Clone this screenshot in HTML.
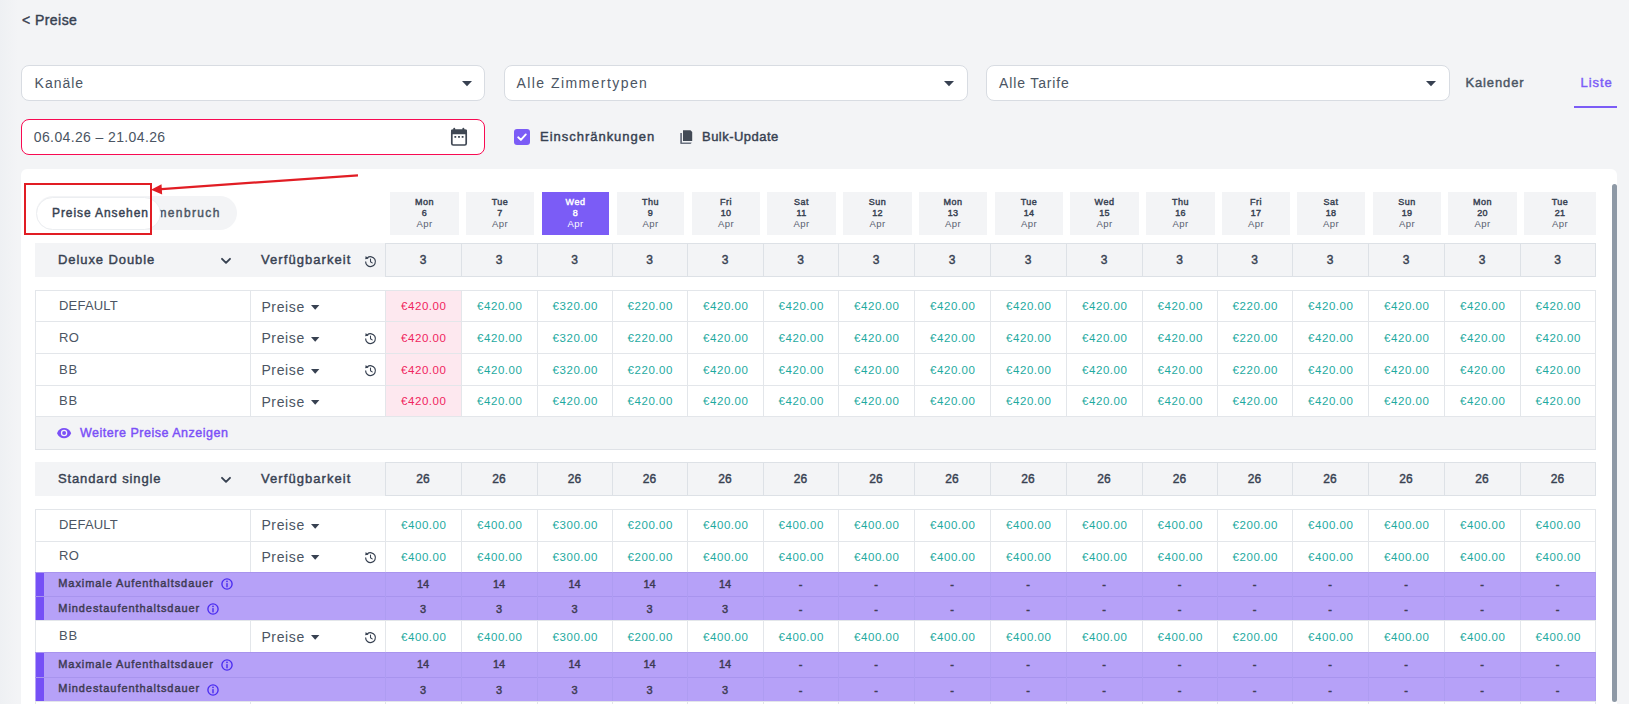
<!DOCTYPE html>
<html><head><meta charset="utf-8"><title>Preise</title>
<style>
html,body{margin:0;padding:0;}
body{width:1629px;height:704px;overflow:hidden;background:#f3f4f6;position:relative;font-family:"Liberation Sans", sans-serif;}
.t{position:absolute;white-space:nowrap;line-height:1;}
.r{position:absolute;display:block;}
</style></head><body>
<div class="r" style="left:0.00px;top:0.00px;width:18.00px;height:704.00px;background:linear-gradient(90deg,#eef0f3,#f3f4f6)"></div>
<div class="t" style="left:22.00px;top:13.35px;font-size:14px;font-weight:400;-webkit-text-stroke:0.42px #374151;color:#374151;letter-spacing:0.450px;">&lt; Preise</div>
<div class="r" style="left:21.00px;top:65.00px;width:464.00px;height:36.00px;background:#fff;border:1px solid #d8dce2;border-radius:8px;box-sizing:border-box"></div>
<div class="t" style="left:34.60px;top:76.25px;font-size:14px;font-weight:400;color:#4b5563;letter-spacing:0.981px;">Kanäle</div>
<svg class="r" style="left:461.8px;top:80.8px" width="10" height="6" viewBox="0 0 10 6"><polygon points="0,0 10,0 5.0,5.2" fill="#374151"/></svg>
<div class="r" style="left:504.00px;top:65.00px;width:464.00px;height:36.00px;background:#fff;border:1px solid #d8dce2;border-radius:8px;box-sizing:border-box"></div>
<div class="t" style="left:516.50px;top:76.25px;font-size:14px;font-weight:400;color:#4b5563;letter-spacing:1.432px;">Alle Zimmertypen</div>
<svg class="r" style="left:943.8px;top:80.8px" width="10" height="6" viewBox="0 0 10 6"><polygon points="0,0 10,0 5.0,5.2" fill="#374151"/></svg>
<div class="r" style="left:986.00px;top:65.00px;width:464.00px;height:36.00px;background:#fff;border:1px solid #d8dce2;border-radius:8px;box-sizing:border-box"></div>
<div class="t" style="left:999.00px;top:76.25px;font-size:14px;font-weight:400;color:#4b5563;letter-spacing:0.868px;">Alle Tarife</div>
<svg class="r" style="left:1426.3px;top:80.8px" width="10" height="6" viewBox="0 0 10 6"><polygon points="0,0 10,0 5.0,5.2" fill="#374151"/></svg>
<div class="t" style="left:1465.40px;top:76.19px;font-size:13px;font-weight:400;-webkit-text-stroke:0.42px #4b5563;color:#4b5563;letter-spacing:0.893px;">Kalender</div>
<div class="t" style="left:1580.50px;top:76.19px;font-size:13px;font-weight:400;-webkit-text-stroke:0.42px #7b5cf6;color:#7b5cf6;letter-spacing:0.933px;">Liste</div>
<div class="r" style="left:1574.00px;top:106.00px;width:43.00px;height:2.00px;background:#7b5cf6"></div>
<div class="r" style="left:21.00px;top:119.00px;width:464.00px;height:36.00px;background:#fff;border:1.5px solid #f80a52;border-radius:8px;box-sizing:border-box"></div>
<div class="t" style="left:33.80px;top:129.95px;font-size:14px;font-weight:400;color:#4b5563;letter-spacing:0.374px;">06.04.26 – 21.04.26</div>
<svg class="r" style="left:450px;top:127px" width="18" height="20" viewBox="0 0 18 20"><rect x="1.8" y="3.4" width="14.4" height="14.6" rx="1.5" fill="none" stroke="#3f4753" stroke-width="1.7"/><rect x="1" y="2.6" width="16" height="4.6" rx="1" fill="#3f4753"/><rect x="3.3" y="0.8" width="1.9" height="3.3" rx="0.9" fill="#3f4753"/><rect x="12.4" y="0.8" width="1.9" height="3.3" rx="0.9" fill="#3f4753"/><rect x="4.4" y="9.0" width="1.8" height="1.8" fill="#3f4753"/><rect x="8.1" y="9.0" width="1.8" height="1.8" fill="#3f4753"/><rect x="11.7" y="9.0" width="1.8" height="1.8" fill="#3f4753"/></svg>
<div class="r" style="left:514.00px;top:129.00px;width:16.00px;height:16.00px;background:#7b5cf6;border-radius:3px"></div>
<svg class="r" style="left:514px;top:129px" width="16" height="16" viewBox="0 0 16 16"><polyline points="4.2,8.3 6.9,10.9 11.8,5.4" fill="none" stroke="#fff" stroke-width="1.9" stroke-linecap="round" stroke-linejoin="round"/></svg>
<div class="t" style="left:540.00px;top:130.29px;font-size:13px;font-weight:400;-webkit-text-stroke:0.42px #374151;color:#374151;letter-spacing:0.981px;">Einschränkungen</div>
<svg class="r" style="left:679px;top:129px" width="15" height="16" viewBox="0 0 15 16"><path d="M1.2 4 V14.2 Q1.2 15 2 15 H11.5 L12.5 14 V13.5 H3 V4 Z" fill="#6b7280"/><path d="M4 1.2 H11.5 L13.2 2.9 V12 H4 Z" fill="#424a56"/></svg>
<div class="t" style="left:702.00px;top:130.29px;font-size:13px;font-weight:400;-webkit-text-stroke:0.42px #374151;color:#374151;letter-spacing:0.475px;">Bulk-Update</div>
<div class="r" style="left:21.00px;top:169.00px;width:1596.00px;height:600.00px;background:#fff;border-radius:6px"></div>
<div class="r" style="left:1612.00px;top:184.00px;width:5.00px;height:518.00px;background:#8e99a6;border-radius:3px"></div>
<div class="r" style="left:35.50px;top:196.00px;width:201.00px;height:33.50px;background:#f3f4f6;border-radius:17px"></div>
<div class="t" style="left:-179.30px;width:400px;text-align:right;top:206.54px;font-size:12px;font-weight:400;-webkit-text-stroke:0.42px #4b5563;color:#4b5563;letter-spacing:1.361px;">menbruch</div>
<div class="r" style="left:35.50px;top:196.50px;width:125.00px;height:33.00px;background:#fff;border:1px solid #eceef1;border-radius:17px;box-sizing:border-box"></div>
<div class="t" style="left:52.00px;top:206.54px;font-size:12px;font-weight:400;-webkit-text-stroke:0.42px #374151;color:#374151;letter-spacing:0.911px;">Preise Ansehen</div>
<div class="r" style="left:390.00px;top:192.00px;width:69.00px;height:43.00px;background:#f3f4f6"></div>
<div class="t" style="left:274.50px;width:300px;text-align:center;top:198.28px;font-size:9px;font-weight:400;-webkit-text-stroke:0.42px #374151;color:#374151;letter-spacing:0.000px;letter-spacing:0.5px">Mon</div>
<div class="t" style="left:274.50px;width:300px;text-align:center;top:209.08px;font-size:9px;font-weight:400;-webkit-text-stroke:0.42px #374151;color:#374151;letter-spacing:0.000px;letter-spacing:0.3px">6</div>
<div class="t" style="left:274.50px;width:300px;text-align:center;top:218.66px;font-size:9.5px;font-weight:400;color:#586070;letter-spacing:0.000px;letter-spacing:0.4px">Apr</div>
<div class="r" style="left:466.00px;top:192.00px;width:68.00px;height:43.00px;background:#f3f4f6"></div>
<div class="t" style="left:350.00px;width:300px;text-align:center;top:198.28px;font-size:9px;font-weight:400;-webkit-text-stroke:0.42px #374151;color:#374151;letter-spacing:0.000px;letter-spacing:0.5px">Tue</div>
<div class="t" style="left:350.00px;width:300px;text-align:center;top:209.08px;font-size:9px;font-weight:400;-webkit-text-stroke:0.42px #374151;color:#374151;letter-spacing:0.000px;letter-spacing:0.3px">7</div>
<div class="t" style="left:350.00px;width:300px;text-align:center;top:218.66px;font-size:9.5px;font-weight:400;color:#586070;letter-spacing:0.000px;letter-spacing:0.4px">Apr</div>
<div class="r" style="left:542.00px;top:192.00px;width:67.00px;height:43.00px;background:#7b5cf6"></div>
<div class="t" style="left:425.50px;width:300px;text-align:center;top:198.28px;font-size:9px;font-weight:400;-webkit-text-stroke:0.42px #fff;color:#fff;letter-spacing:0.000px;letter-spacing:0.5px">Wed</div>
<div class="t" style="left:425.50px;width:300px;text-align:center;top:209.08px;font-size:9px;font-weight:400;-webkit-text-stroke:0.42px #fff;color:#fff;letter-spacing:0.000px;letter-spacing:0.3px">8</div>
<div class="t" style="left:425.50px;width:300px;text-align:center;top:218.66px;font-size:9.5px;font-weight:400;color:#fff;letter-spacing:0.000px;letter-spacing:0.4px">Apr</div>
<div class="r" style="left:617.00px;top:192.00px;width:67.00px;height:43.00px;background:#f3f4f6"></div>
<div class="t" style="left:500.50px;width:300px;text-align:center;top:198.28px;font-size:9px;font-weight:400;-webkit-text-stroke:0.42px #374151;color:#374151;letter-spacing:0.000px;letter-spacing:0.5px">Thu</div>
<div class="t" style="left:500.50px;width:300px;text-align:center;top:209.08px;font-size:9px;font-weight:400;-webkit-text-stroke:0.42px #374151;color:#374151;letter-spacing:0.000px;letter-spacing:0.3px">9</div>
<div class="t" style="left:500.50px;width:300px;text-align:center;top:218.66px;font-size:9.5px;font-weight:400;color:#586070;letter-spacing:0.000px;letter-spacing:0.4px">Apr</div>
<div class="r" style="left:692.00px;top:192.00px;width:68.00px;height:43.00px;background:#f3f4f6"></div>
<div class="t" style="left:576.00px;width:300px;text-align:center;top:198.28px;font-size:9px;font-weight:400;-webkit-text-stroke:0.42px #374151;color:#374151;letter-spacing:0.000px;letter-spacing:0.5px">Fri</div>
<div class="t" style="left:576.00px;width:300px;text-align:center;top:209.08px;font-size:9px;font-weight:400;-webkit-text-stroke:0.42px #374151;color:#374151;letter-spacing:0.000px;letter-spacing:0.3px">10</div>
<div class="t" style="left:576.00px;width:300px;text-align:center;top:218.66px;font-size:9.5px;font-weight:400;color:#586070;letter-spacing:0.000px;letter-spacing:0.4px">Apr</div>
<div class="r" style="left:767.00px;top:192.00px;width:69.00px;height:43.00px;background:#f3f4f6"></div>
<div class="t" style="left:651.50px;width:300px;text-align:center;top:198.28px;font-size:9px;font-weight:400;-webkit-text-stroke:0.42px #374151;color:#374151;letter-spacing:0.000px;letter-spacing:0.5px">Sat</div>
<div class="t" style="left:651.50px;width:300px;text-align:center;top:209.08px;font-size:9px;font-weight:400;-webkit-text-stroke:0.42px #374151;color:#374151;letter-spacing:0.000px;letter-spacing:0.3px">11</div>
<div class="t" style="left:651.50px;width:300px;text-align:center;top:218.66px;font-size:9.5px;font-weight:400;color:#586070;letter-spacing:0.000px;letter-spacing:0.4px">Apr</div>
<div class="r" style="left:843.00px;top:192.00px;width:69.00px;height:43.00px;background:#f3f4f6"></div>
<div class="t" style="left:727.50px;width:300px;text-align:center;top:198.28px;font-size:9px;font-weight:400;-webkit-text-stroke:0.42px #374151;color:#374151;letter-spacing:0.000px;letter-spacing:0.5px">Sun</div>
<div class="t" style="left:727.50px;width:300px;text-align:center;top:209.08px;font-size:9px;font-weight:400;-webkit-text-stroke:0.42px #374151;color:#374151;letter-spacing:0.000px;letter-spacing:0.3px">12</div>
<div class="t" style="left:727.50px;width:300px;text-align:center;top:218.66px;font-size:9.5px;font-weight:400;color:#586070;letter-spacing:0.000px;letter-spacing:0.4px">Apr</div>
<div class="r" style="left:919.00px;top:192.00px;width:68.00px;height:43.00px;background:#f3f4f6"></div>
<div class="t" style="left:803.00px;width:300px;text-align:center;top:198.28px;font-size:9px;font-weight:400;-webkit-text-stroke:0.42px #374151;color:#374151;letter-spacing:0.000px;letter-spacing:0.5px">Mon</div>
<div class="t" style="left:803.00px;width:300px;text-align:center;top:209.08px;font-size:9px;font-weight:400;-webkit-text-stroke:0.42px #374151;color:#374151;letter-spacing:0.000px;letter-spacing:0.3px">13</div>
<div class="t" style="left:803.00px;width:300px;text-align:center;top:218.66px;font-size:9.5px;font-weight:400;color:#586070;letter-spacing:0.000px;letter-spacing:0.4px">Apr</div>
<div class="r" style="left:995.00px;top:192.00px;width:68.00px;height:43.00px;background:#f3f4f6"></div>
<div class="t" style="left:879.00px;width:300px;text-align:center;top:198.28px;font-size:9px;font-weight:400;-webkit-text-stroke:0.42px #374151;color:#374151;letter-spacing:0.000px;letter-spacing:0.5px">Tue</div>
<div class="t" style="left:879.00px;width:300px;text-align:center;top:209.08px;font-size:9px;font-weight:400;-webkit-text-stroke:0.42px #374151;color:#374151;letter-spacing:0.000px;letter-spacing:0.3px">14</div>
<div class="t" style="left:879.00px;width:300px;text-align:center;top:218.66px;font-size:9.5px;font-weight:400;color:#586070;letter-spacing:0.000px;letter-spacing:0.4px">Apr</div>
<div class="r" style="left:1070.00px;top:192.00px;width:69.00px;height:43.00px;background:#f3f4f6"></div>
<div class="t" style="left:954.50px;width:300px;text-align:center;top:198.28px;font-size:9px;font-weight:400;-webkit-text-stroke:0.42px #374151;color:#374151;letter-spacing:0.000px;letter-spacing:0.5px">Wed</div>
<div class="t" style="left:954.50px;width:300px;text-align:center;top:209.08px;font-size:9px;font-weight:400;-webkit-text-stroke:0.42px #374151;color:#374151;letter-spacing:0.000px;letter-spacing:0.3px">15</div>
<div class="t" style="left:954.50px;width:300px;text-align:center;top:218.66px;font-size:9.5px;font-weight:400;color:#586070;letter-spacing:0.000px;letter-spacing:0.4px">Apr</div>
<div class="r" style="left:1146.00px;top:192.00px;width:69.00px;height:43.00px;background:#f3f4f6"></div>
<div class="t" style="left:1030.50px;width:300px;text-align:center;top:198.28px;font-size:9px;font-weight:400;-webkit-text-stroke:0.42px #374151;color:#374151;letter-spacing:0.000px;letter-spacing:0.5px">Thu</div>
<div class="t" style="left:1030.50px;width:300px;text-align:center;top:209.08px;font-size:9px;font-weight:400;-webkit-text-stroke:0.42px #374151;color:#374151;letter-spacing:0.000px;letter-spacing:0.3px">16</div>
<div class="t" style="left:1030.50px;width:300px;text-align:center;top:218.66px;font-size:9.5px;font-weight:400;color:#586070;letter-spacing:0.000px;letter-spacing:0.4px">Apr</div>
<div class="r" style="left:1222.00px;top:192.00px;width:68.00px;height:43.00px;background:#f3f4f6"></div>
<div class="t" style="left:1106.00px;width:300px;text-align:center;top:198.28px;font-size:9px;font-weight:400;-webkit-text-stroke:0.42px #374151;color:#374151;letter-spacing:0.000px;letter-spacing:0.5px">Fri</div>
<div class="t" style="left:1106.00px;width:300px;text-align:center;top:209.08px;font-size:9px;font-weight:400;-webkit-text-stroke:0.42px #374151;color:#374151;letter-spacing:0.000px;letter-spacing:0.3px">17</div>
<div class="t" style="left:1106.00px;width:300px;text-align:center;top:218.66px;font-size:9.5px;font-weight:400;color:#586070;letter-spacing:0.000px;letter-spacing:0.4px">Apr</div>
<div class="r" style="left:1297.00px;top:192.00px;width:68.00px;height:43.00px;background:#f3f4f6"></div>
<div class="t" style="left:1181.00px;width:300px;text-align:center;top:198.28px;font-size:9px;font-weight:400;-webkit-text-stroke:0.42px #374151;color:#374151;letter-spacing:0.000px;letter-spacing:0.5px">Sat</div>
<div class="t" style="left:1181.00px;width:300px;text-align:center;top:209.08px;font-size:9px;font-weight:400;-webkit-text-stroke:0.42px #374151;color:#374151;letter-spacing:0.000px;letter-spacing:0.3px">18</div>
<div class="t" style="left:1181.00px;width:300px;text-align:center;top:218.66px;font-size:9.5px;font-weight:400;color:#586070;letter-spacing:0.000px;letter-spacing:0.4px">Apr</div>
<div class="r" style="left:1373.00px;top:192.00px;width:68.00px;height:43.00px;background:#f3f4f6"></div>
<div class="t" style="left:1257.00px;width:300px;text-align:center;top:198.28px;font-size:9px;font-weight:400;-webkit-text-stroke:0.42px #374151;color:#374151;letter-spacing:0.000px;letter-spacing:0.5px">Sun</div>
<div class="t" style="left:1257.00px;width:300px;text-align:center;top:209.08px;font-size:9px;font-weight:400;-webkit-text-stroke:0.42px #374151;color:#374151;letter-spacing:0.000px;letter-spacing:0.3px">19</div>
<div class="t" style="left:1257.00px;width:300px;text-align:center;top:218.66px;font-size:9.5px;font-weight:400;color:#586070;letter-spacing:0.000px;letter-spacing:0.4px">Apr</div>
<div class="r" style="left:1448.00px;top:192.00px;width:69.00px;height:43.00px;background:#f3f4f6"></div>
<div class="t" style="left:1332.50px;width:300px;text-align:center;top:198.28px;font-size:9px;font-weight:400;-webkit-text-stroke:0.42px #374151;color:#374151;letter-spacing:0.000px;letter-spacing:0.5px">Mon</div>
<div class="t" style="left:1332.50px;width:300px;text-align:center;top:209.08px;font-size:9px;font-weight:400;-webkit-text-stroke:0.42px #374151;color:#374151;letter-spacing:0.000px;letter-spacing:0.3px">20</div>
<div class="t" style="left:1332.50px;width:300px;text-align:center;top:218.66px;font-size:9.5px;font-weight:400;color:#586070;letter-spacing:0.000px;letter-spacing:0.4px">Apr</div>
<div class="r" style="left:1524.00px;top:192.00px;width:72.00px;height:43.00px;background:#f3f4f6"></div>
<div class="t" style="left:1410.00px;width:300px;text-align:center;top:198.28px;font-size:9px;font-weight:400;-webkit-text-stroke:0.42px #374151;color:#374151;letter-spacing:0.000px;letter-spacing:0.5px">Tue</div>
<div class="t" style="left:1410.00px;width:300px;text-align:center;top:209.08px;font-size:9px;font-weight:400;-webkit-text-stroke:0.42px #374151;color:#374151;letter-spacing:0.000px;letter-spacing:0.3px">21</div>
<div class="t" style="left:1410.00px;width:300px;text-align:center;top:218.66px;font-size:9.5px;font-weight:400;color:#586070;letter-spacing:0.000px;letter-spacing:0.4px">Apr</div>
<div class="r" style="left:35.00px;top:243.00px;width:350.50px;height:33.50px;background:#f3f4f6"></div>
<div class="t" style="left:58.00px;top:253.04px;font-size:13px;font-weight:400;-webkit-text-stroke:0.42px #374151;color:#374151;letter-spacing:0.918px;">Deluxe Double</div>
<svg class="r" style="left:220px;top:256.65px" width="12" height="8" viewBox="0 0 12 8"><polyline points="2,1.8 6,5.8 10,1.8" fill="none" stroke="#374151" stroke-width="1.9" stroke-linecap="round" stroke-linejoin="round"/></svg>
<div class="t" style="left:261.00px;top:253.04px;font-size:13px;font-weight:400;-webkit-text-stroke:0.42px #374151;color:#374151;letter-spacing:1.066px;">Verfügbarkeit</div>
<svg class="r" style="left:364px;top:255px" width="13" height="13" viewBox="0 0 13 13"><path d="M3.2 3.0 A4.9 4.9 0 1 1 1.6 6.5" fill="none" stroke="#374151" stroke-width="1.2"/><polygon points="1.7,1.0 4.6,3.7 1.2,4.3" fill="#374151"/><polyline points="6.5,4.0 6.5,6.7 8.2,7.9" fill="none" stroke="#374151" stroke-width="1.05" stroke-linecap="round" stroke-linejoin="round"/></svg>
<div class="r" style="left:385.00px;top:243.00px;width:1211.00px;height:33.50px;background:#f3f4f6;border:1px solid #dde1e6;box-sizing:border-box"></div>
<div class="r" style="left:461.00px;top:243.00px;width:1.00px;height:33.50px;background:#dde1e6"></div>
<div class="r" style="left:537.00px;top:243.00px;width:1.00px;height:33.50px;background:#dde1e6"></div>
<div class="r" style="left:612.00px;top:243.00px;width:1.00px;height:33.50px;background:#dde1e6"></div>
<div class="r" style="left:687.00px;top:243.00px;width:1.00px;height:33.50px;background:#dde1e6"></div>
<div class="r" style="left:763.00px;top:243.00px;width:1.00px;height:33.50px;background:#dde1e6"></div>
<div class="r" style="left:838.00px;top:243.00px;width:1.00px;height:33.50px;background:#dde1e6"></div>
<div class="r" style="left:914.00px;top:243.00px;width:1.00px;height:33.50px;background:#dde1e6"></div>
<div class="r" style="left:990.00px;top:243.00px;width:1.00px;height:33.50px;background:#dde1e6"></div>
<div class="r" style="left:1066.00px;top:243.00px;width:1.00px;height:33.50px;background:#dde1e6"></div>
<div class="r" style="left:1142.00px;top:243.00px;width:1.00px;height:33.50px;background:#dde1e6"></div>
<div class="r" style="left:1217.00px;top:243.00px;width:1.00px;height:33.50px;background:#dde1e6"></div>
<div class="r" style="left:1292.00px;top:243.00px;width:1.00px;height:33.50px;background:#dde1e6"></div>
<div class="r" style="left:1368.00px;top:243.00px;width:1.00px;height:33.50px;background:#dde1e6"></div>
<div class="r" style="left:1444.00px;top:243.00px;width:1.00px;height:33.50px;background:#dde1e6"></div>
<div class="r" style="left:1520.00px;top:243.00px;width:1.00px;height:33.50px;background:#dde1e6"></div>
<div class="t" style="left:273.00px;width:300px;text-align:center;top:254.19px;font-size:12px;font-weight:400;-webkit-text-stroke:0.42px #374151;color:#374151;letter-spacing:0.000px;">3</div>
<div class="t" style="left:349.00px;width:300px;text-align:center;top:254.19px;font-size:12px;font-weight:400;-webkit-text-stroke:0.42px #374151;color:#374151;letter-spacing:0.000px;">3</div>
<div class="t" style="left:424.50px;width:300px;text-align:center;top:254.19px;font-size:12px;font-weight:400;-webkit-text-stroke:0.42px #374151;color:#374151;letter-spacing:0.000px;">3</div>
<div class="t" style="left:499.50px;width:300px;text-align:center;top:254.19px;font-size:12px;font-weight:400;-webkit-text-stroke:0.42px #374151;color:#374151;letter-spacing:0.000px;">3</div>
<div class="t" style="left:575.00px;width:300px;text-align:center;top:254.19px;font-size:12px;font-weight:400;-webkit-text-stroke:0.42px #374151;color:#374151;letter-spacing:0.000px;">3</div>
<div class="t" style="left:650.50px;width:300px;text-align:center;top:254.19px;font-size:12px;font-weight:400;-webkit-text-stroke:0.42px #374151;color:#374151;letter-spacing:0.000px;">3</div>
<div class="t" style="left:726.00px;width:300px;text-align:center;top:254.19px;font-size:12px;font-weight:400;-webkit-text-stroke:0.42px #374151;color:#374151;letter-spacing:0.000px;">3</div>
<div class="t" style="left:802.00px;width:300px;text-align:center;top:254.19px;font-size:12px;font-weight:400;-webkit-text-stroke:0.42px #374151;color:#374151;letter-spacing:0.000px;">3</div>
<div class="t" style="left:878.00px;width:300px;text-align:center;top:254.19px;font-size:12px;font-weight:400;-webkit-text-stroke:0.42px #374151;color:#374151;letter-spacing:0.000px;">3</div>
<div class="t" style="left:954.00px;width:300px;text-align:center;top:254.19px;font-size:12px;font-weight:400;-webkit-text-stroke:0.42px #374151;color:#374151;letter-spacing:0.000px;">3</div>
<div class="t" style="left:1029.50px;width:300px;text-align:center;top:254.19px;font-size:12px;font-weight:400;-webkit-text-stroke:0.42px #374151;color:#374151;letter-spacing:0.000px;">3</div>
<div class="t" style="left:1104.50px;width:300px;text-align:center;top:254.19px;font-size:12px;font-weight:400;-webkit-text-stroke:0.42px #374151;color:#374151;letter-spacing:0.000px;">3</div>
<div class="t" style="left:1180.00px;width:300px;text-align:center;top:254.19px;font-size:12px;font-weight:400;-webkit-text-stroke:0.42px #374151;color:#374151;letter-spacing:0.000px;">3</div>
<div class="t" style="left:1256.00px;width:300px;text-align:center;top:254.19px;font-size:12px;font-weight:400;-webkit-text-stroke:0.42px #374151;color:#374151;letter-spacing:0.000px;">3</div>
<div class="t" style="left:1332.00px;width:300px;text-align:center;top:254.19px;font-size:12px;font-weight:400;-webkit-text-stroke:0.42px #374151;color:#374151;letter-spacing:0.000px;">3</div>
<div class="t" style="left:1407.50px;width:300px;text-align:center;top:254.19px;font-size:12px;font-weight:400;-webkit-text-stroke:0.42px #374151;color:#374151;letter-spacing:0.000px;">3</div>
<div class="r" style="left:35.00px;top:290.00px;width:1560.00px;height:31.00px;background:#fff"></div>
<div class="r" style="left:385.00px;top:290.00px;width:75.62px;height:31.00px;background:#fde8ef"></div>
<div class="t" style="left:59.00px;top:299.19px;font-size:13px;font-weight:400;color:#4b5563;letter-spacing:0.000px;letter-spacing:0.2px">DEFAULT</div>
<div class="t" style="left:261.40px;top:299.55px;font-size:14px;font-weight:400;color:#4b5563;letter-spacing:0.642px;">Preise</div>
<svg class="r" style="left:310.8px;top:305.0px" width="10" height="6" viewBox="0 0 10 6"><polygon points="0,0 8.4,0 4.2,4.8" fill="#374151"/></svg>
<div class="t" style="left:273.80px;width:300px;text-align:center;top:301.46px;font-size:11.5px;font-weight:400;color:#f0245e;letter-spacing:0.554px;">€420.00</div>
<div class="t" style="left:349.80px;width:300px;text-align:center;top:301.46px;font-size:11.5px;font-weight:400;color:#1eaa9f;letter-spacing:0.554px;">€420.00</div>
<div class="t" style="left:425.30px;width:300px;text-align:center;top:301.46px;font-size:11.5px;font-weight:400;color:#1eaa9f;letter-spacing:0.554px;">€320.00</div>
<div class="t" style="left:500.30px;width:300px;text-align:center;top:301.46px;font-size:11.5px;font-weight:400;color:#1eaa9f;letter-spacing:0.554px;">€220.00</div>
<div class="t" style="left:575.80px;width:300px;text-align:center;top:301.46px;font-size:11.5px;font-weight:400;color:#1eaa9f;letter-spacing:0.554px;">€420.00</div>
<div class="t" style="left:651.30px;width:300px;text-align:center;top:301.46px;font-size:11.5px;font-weight:400;color:#1eaa9f;letter-spacing:0.554px;">€420.00</div>
<div class="t" style="left:726.80px;width:300px;text-align:center;top:301.46px;font-size:11.5px;font-weight:400;color:#1eaa9f;letter-spacing:0.554px;">€420.00</div>
<div class="t" style="left:802.80px;width:300px;text-align:center;top:301.46px;font-size:11.5px;font-weight:400;color:#1eaa9f;letter-spacing:0.554px;">€420.00</div>
<div class="t" style="left:878.80px;width:300px;text-align:center;top:301.46px;font-size:11.5px;font-weight:400;color:#1eaa9f;letter-spacing:0.554px;">€420.00</div>
<div class="t" style="left:954.80px;width:300px;text-align:center;top:301.46px;font-size:11.5px;font-weight:400;color:#1eaa9f;letter-spacing:0.554px;">€420.00</div>
<div class="t" style="left:1030.30px;width:300px;text-align:center;top:301.46px;font-size:11.5px;font-weight:400;color:#1eaa9f;letter-spacing:0.554px;">€420.00</div>
<div class="t" style="left:1105.30px;width:300px;text-align:center;top:301.46px;font-size:11.5px;font-weight:400;color:#1eaa9f;letter-spacing:0.554px;">€220.00</div>
<div class="t" style="left:1180.80px;width:300px;text-align:center;top:301.46px;font-size:11.5px;font-weight:400;color:#1eaa9f;letter-spacing:0.554px;">€420.00</div>
<div class="t" style="left:1256.80px;width:300px;text-align:center;top:301.46px;font-size:11.5px;font-weight:400;color:#1eaa9f;letter-spacing:0.554px;">€420.00</div>
<div class="t" style="left:1332.80px;width:300px;text-align:center;top:301.46px;font-size:11.5px;font-weight:400;color:#1eaa9f;letter-spacing:0.554px;">€420.00</div>
<div class="t" style="left:1408.30px;width:300px;text-align:center;top:301.46px;font-size:11.5px;font-weight:400;color:#1eaa9f;letter-spacing:0.554px;">€420.00</div>
<div class="r" style="left:35.00px;top:321.00px;width:1560.00px;height:32.00px;background:#fff"></div>
<div class="r" style="left:385.00px;top:321.00px;width:75.62px;height:32.00px;background:#fde8ef"></div>
<div class="t" style="left:59.00px;top:330.69px;font-size:13px;font-weight:400;color:#4b5563;letter-spacing:0.000px;letter-spacing:0.3px">RO</div>
<div class="t" style="left:261.40px;top:331.05px;font-size:14px;font-weight:400;color:#4b5563;letter-spacing:0.642px;">Preise</div>
<svg class="r" style="left:310.8px;top:336.5px" width="10" height="6" viewBox="0 0 10 6"><polygon points="0,0 8.4,0 4.2,4.8" fill="#374151"/></svg>
<svg class="r" style="left:364px;top:332px" width="13" height="13" viewBox="0 0 13 13"><path d="M3.2 3.0 A4.9 4.9 0 1 1 1.6 6.5" fill="none" stroke="#374151" stroke-width="1.2"/><polygon points="1.7,1.0 4.6,3.7 1.2,4.3" fill="#374151"/><polyline points="6.5,4.0 6.5,6.7 8.2,7.9" fill="none" stroke="#374151" stroke-width="1.05" stroke-linecap="round" stroke-linejoin="round"/></svg>
<div class="t" style="left:273.80px;width:300px;text-align:center;top:332.96px;font-size:11.5px;font-weight:400;color:#f0245e;letter-spacing:0.554px;">€420.00</div>
<div class="t" style="left:349.80px;width:300px;text-align:center;top:332.96px;font-size:11.5px;font-weight:400;color:#1eaa9f;letter-spacing:0.554px;">€420.00</div>
<div class="t" style="left:425.30px;width:300px;text-align:center;top:332.96px;font-size:11.5px;font-weight:400;color:#1eaa9f;letter-spacing:0.554px;">€320.00</div>
<div class="t" style="left:500.30px;width:300px;text-align:center;top:332.96px;font-size:11.5px;font-weight:400;color:#1eaa9f;letter-spacing:0.554px;">€220.00</div>
<div class="t" style="left:575.80px;width:300px;text-align:center;top:332.96px;font-size:11.5px;font-weight:400;color:#1eaa9f;letter-spacing:0.554px;">€420.00</div>
<div class="t" style="left:651.30px;width:300px;text-align:center;top:332.96px;font-size:11.5px;font-weight:400;color:#1eaa9f;letter-spacing:0.554px;">€420.00</div>
<div class="t" style="left:726.80px;width:300px;text-align:center;top:332.96px;font-size:11.5px;font-weight:400;color:#1eaa9f;letter-spacing:0.554px;">€420.00</div>
<div class="t" style="left:802.80px;width:300px;text-align:center;top:332.96px;font-size:11.5px;font-weight:400;color:#1eaa9f;letter-spacing:0.554px;">€420.00</div>
<div class="t" style="left:878.80px;width:300px;text-align:center;top:332.96px;font-size:11.5px;font-weight:400;color:#1eaa9f;letter-spacing:0.554px;">€420.00</div>
<div class="t" style="left:954.80px;width:300px;text-align:center;top:332.96px;font-size:11.5px;font-weight:400;color:#1eaa9f;letter-spacing:0.554px;">€420.00</div>
<div class="t" style="left:1030.30px;width:300px;text-align:center;top:332.96px;font-size:11.5px;font-weight:400;color:#1eaa9f;letter-spacing:0.554px;">€420.00</div>
<div class="t" style="left:1105.30px;width:300px;text-align:center;top:332.96px;font-size:11.5px;font-weight:400;color:#1eaa9f;letter-spacing:0.554px;">€220.00</div>
<div class="t" style="left:1180.80px;width:300px;text-align:center;top:332.96px;font-size:11.5px;font-weight:400;color:#1eaa9f;letter-spacing:0.554px;">€420.00</div>
<div class="t" style="left:1256.80px;width:300px;text-align:center;top:332.96px;font-size:11.5px;font-weight:400;color:#1eaa9f;letter-spacing:0.554px;">€420.00</div>
<div class="t" style="left:1332.80px;width:300px;text-align:center;top:332.96px;font-size:11.5px;font-weight:400;color:#1eaa9f;letter-spacing:0.554px;">€420.00</div>
<div class="t" style="left:1408.30px;width:300px;text-align:center;top:332.96px;font-size:11.5px;font-weight:400;color:#1eaa9f;letter-spacing:0.554px;">€420.00</div>
<div class="r" style="left:35.00px;top:353.00px;width:1560.00px;height:32.00px;background:#fff"></div>
<div class="r" style="left:385.00px;top:353.00px;width:75.62px;height:32.00px;background:#fde8ef"></div>
<div class="t" style="left:59.00px;top:362.69px;font-size:13px;font-weight:400;color:#4b5563;letter-spacing:0.000px;letter-spacing:0.8px">BB</div>
<div class="t" style="left:261.40px;top:363.05px;font-size:14px;font-weight:400;color:#4b5563;letter-spacing:0.642px;">Preise</div>
<svg class="r" style="left:310.8px;top:368.5px" width="10" height="6" viewBox="0 0 10 6"><polygon points="0,0 8.4,0 4.2,4.8" fill="#374151"/></svg>
<svg class="r" style="left:364px;top:364px" width="13" height="13" viewBox="0 0 13 13"><path d="M3.2 3.0 A4.9 4.9 0 1 1 1.6 6.5" fill="none" stroke="#374151" stroke-width="1.2"/><polygon points="1.7,1.0 4.6,3.7 1.2,4.3" fill="#374151"/><polyline points="6.5,4.0 6.5,6.7 8.2,7.9" fill="none" stroke="#374151" stroke-width="1.05" stroke-linecap="round" stroke-linejoin="round"/></svg>
<div class="t" style="left:273.80px;width:300px;text-align:center;top:364.96px;font-size:11.5px;font-weight:400;color:#f0245e;letter-spacing:0.554px;">€420.00</div>
<div class="t" style="left:349.80px;width:300px;text-align:center;top:364.96px;font-size:11.5px;font-weight:400;color:#1eaa9f;letter-spacing:0.554px;">€420.00</div>
<div class="t" style="left:425.30px;width:300px;text-align:center;top:364.96px;font-size:11.5px;font-weight:400;color:#1eaa9f;letter-spacing:0.554px;">€320.00</div>
<div class="t" style="left:500.30px;width:300px;text-align:center;top:364.96px;font-size:11.5px;font-weight:400;color:#1eaa9f;letter-spacing:0.554px;">€220.00</div>
<div class="t" style="left:575.80px;width:300px;text-align:center;top:364.96px;font-size:11.5px;font-weight:400;color:#1eaa9f;letter-spacing:0.554px;">€420.00</div>
<div class="t" style="left:651.30px;width:300px;text-align:center;top:364.96px;font-size:11.5px;font-weight:400;color:#1eaa9f;letter-spacing:0.554px;">€420.00</div>
<div class="t" style="left:726.80px;width:300px;text-align:center;top:364.96px;font-size:11.5px;font-weight:400;color:#1eaa9f;letter-spacing:0.554px;">€420.00</div>
<div class="t" style="left:802.80px;width:300px;text-align:center;top:364.96px;font-size:11.5px;font-weight:400;color:#1eaa9f;letter-spacing:0.554px;">€420.00</div>
<div class="t" style="left:878.80px;width:300px;text-align:center;top:364.96px;font-size:11.5px;font-weight:400;color:#1eaa9f;letter-spacing:0.554px;">€420.00</div>
<div class="t" style="left:954.80px;width:300px;text-align:center;top:364.96px;font-size:11.5px;font-weight:400;color:#1eaa9f;letter-spacing:0.554px;">€420.00</div>
<div class="t" style="left:1030.30px;width:300px;text-align:center;top:364.96px;font-size:11.5px;font-weight:400;color:#1eaa9f;letter-spacing:0.554px;">€420.00</div>
<div class="t" style="left:1105.30px;width:300px;text-align:center;top:364.96px;font-size:11.5px;font-weight:400;color:#1eaa9f;letter-spacing:0.554px;">€220.00</div>
<div class="t" style="left:1180.80px;width:300px;text-align:center;top:364.96px;font-size:11.5px;font-weight:400;color:#1eaa9f;letter-spacing:0.554px;">€420.00</div>
<div class="t" style="left:1256.80px;width:300px;text-align:center;top:364.96px;font-size:11.5px;font-weight:400;color:#1eaa9f;letter-spacing:0.554px;">€420.00</div>
<div class="t" style="left:1332.80px;width:300px;text-align:center;top:364.96px;font-size:11.5px;font-weight:400;color:#1eaa9f;letter-spacing:0.554px;">€420.00</div>
<div class="t" style="left:1408.30px;width:300px;text-align:center;top:364.96px;font-size:11.5px;font-weight:400;color:#1eaa9f;letter-spacing:0.554px;">€420.00</div>
<div class="r" style="left:35.00px;top:385.00px;width:1560.00px;height:31.00px;background:#fff"></div>
<div class="r" style="left:385.00px;top:385.00px;width:75.62px;height:31.00px;background:#fde8ef"></div>
<div class="t" style="left:59.00px;top:394.19px;font-size:13px;font-weight:400;color:#4b5563;letter-spacing:0.000px;letter-spacing:0.8px">BB</div>
<div class="t" style="left:261.40px;top:394.55px;font-size:14px;font-weight:400;color:#4b5563;letter-spacing:0.642px;">Preise</div>
<svg class="r" style="left:310.8px;top:400.0px" width="10" height="6" viewBox="0 0 10 6"><polygon points="0,0 8.4,0 4.2,4.8" fill="#374151"/></svg>
<div class="t" style="left:273.80px;width:300px;text-align:center;top:396.46px;font-size:11.5px;font-weight:400;color:#f0245e;letter-spacing:0.554px;">€420.00</div>
<div class="t" style="left:349.80px;width:300px;text-align:center;top:396.46px;font-size:11.5px;font-weight:400;color:#1eaa9f;letter-spacing:0.554px;">€420.00</div>
<div class="t" style="left:425.30px;width:300px;text-align:center;top:396.46px;font-size:11.5px;font-weight:400;color:#1eaa9f;letter-spacing:0.554px;">€420.00</div>
<div class="t" style="left:500.30px;width:300px;text-align:center;top:396.46px;font-size:11.5px;font-weight:400;color:#1eaa9f;letter-spacing:0.554px;">€420.00</div>
<div class="t" style="left:575.80px;width:300px;text-align:center;top:396.46px;font-size:11.5px;font-weight:400;color:#1eaa9f;letter-spacing:0.554px;">€420.00</div>
<div class="t" style="left:651.30px;width:300px;text-align:center;top:396.46px;font-size:11.5px;font-weight:400;color:#1eaa9f;letter-spacing:0.554px;">€420.00</div>
<div class="t" style="left:726.80px;width:300px;text-align:center;top:396.46px;font-size:11.5px;font-weight:400;color:#1eaa9f;letter-spacing:0.554px;">€420.00</div>
<div class="t" style="left:802.80px;width:300px;text-align:center;top:396.46px;font-size:11.5px;font-weight:400;color:#1eaa9f;letter-spacing:0.554px;">€420.00</div>
<div class="t" style="left:878.80px;width:300px;text-align:center;top:396.46px;font-size:11.5px;font-weight:400;color:#1eaa9f;letter-spacing:0.554px;">€420.00</div>
<div class="t" style="left:954.80px;width:300px;text-align:center;top:396.46px;font-size:11.5px;font-weight:400;color:#1eaa9f;letter-spacing:0.554px;">€420.00</div>
<div class="t" style="left:1030.30px;width:300px;text-align:center;top:396.46px;font-size:11.5px;font-weight:400;color:#1eaa9f;letter-spacing:0.554px;">€420.00</div>
<div class="t" style="left:1105.30px;width:300px;text-align:center;top:396.46px;font-size:11.5px;font-weight:400;color:#1eaa9f;letter-spacing:0.554px;">€420.00</div>
<div class="t" style="left:1180.80px;width:300px;text-align:center;top:396.46px;font-size:11.5px;font-weight:400;color:#1eaa9f;letter-spacing:0.554px;">€420.00</div>
<div class="t" style="left:1256.80px;width:300px;text-align:center;top:396.46px;font-size:11.5px;font-weight:400;color:#1eaa9f;letter-spacing:0.554px;">€420.00</div>
<div class="t" style="left:1332.80px;width:300px;text-align:center;top:396.46px;font-size:11.5px;font-weight:400;color:#1eaa9f;letter-spacing:0.554px;">€420.00</div>
<div class="t" style="left:1408.30px;width:300px;text-align:center;top:396.46px;font-size:11.5px;font-weight:400;color:#1eaa9f;letter-spacing:0.554px;">€420.00</div>
<div class="r" style="left:35.00px;top:416.00px;width:1560.00px;height:33.00px;background:#f3f4f6"></div>
<svg class="r" style="left:56px;top:427px" width="16" height="12" viewBox="0 0 16 12"><path d="M1 6.2 C3.6 -0.6 12.4 -0.6 15.2 6.2 C12.4 13 3.6 13 1 6.2 Z" fill="#7b50f7"/><circle cx="8.1" cy="6" r="3.2" fill="#f3f4f6"/><circle cx="8.1" cy="6" r="1.95" fill="#7b50f7"/></svg>
<div class="t" style="left:80.00px;top:426.82px;font-size:12.5px;font-weight:400;-webkit-text-stroke:0.42px #7b50f7;color:#7b50f7;letter-spacing:0.511px;">Weitere Preise Anzeigen</div>
<div class="r" style="left:35.00px;top:290.00px;width:1561.00px;height:1.00px;background:#e3e6ea"></div>
<div class="r" style="left:35.00px;top:321.00px;width:1561.00px;height:1.00px;background:#e3e6ea"></div>
<div class="r" style="left:35.00px;top:353.00px;width:1561.00px;height:1.00px;background:#e3e6ea"></div>
<div class="r" style="left:35.00px;top:385.00px;width:1561.00px;height:1.00px;background:#e3e6ea"></div>
<div class="r" style="left:35.00px;top:416.00px;width:1561.00px;height:1.00px;background:#e3e6ea"></div>
<div class="r" style="left:35.00px;top:449.00px;width:1561.00px;height:1.00px;background:#dfe2e7"></div>
<div class="r" style="left:35.00px;top:290.00px;width:1.00px;height:159.00px;background:#e3e6ea"></div>
<div class="r" style="left:1595.00px;top:290.00px;width:1.00px;height:159.00px;background:#e3e6ea"></div>
<div class="r" style="left:250.00px;top:290.00px;width:1.00px;height:126.00px;background:#e3e6ea"></div>
<div class="r" style="left:385.00px;top:290.00px;width:1.00px;height:126.00px;background:#e3e6ea"></div>
<div class="r" style="left:461.00px;top:290.00px;width:1.00px;height:126.00px;background:#e3e6ea"></div>
<div class="r" style="left:537.00px;top:290.00px;width:1.00px;height:126.00px;background:#e3e6ea"></div>
<div class="r" style="left:612.00px;top:290.00px;width:1.00px;height:126.00px;background:#e3e6ea"></div>
<div class="r" style="left:687.00px;top:290.00px;width:1.00px;height:126.00px;background:#e3e6ea"></div>
<div class="r" style="left:763.00px;top:290.00px;width:1.00px;height:126.00px;background:#e3e6ea"></div>
<div class="r" style="left:838.00px;top:290.00px;width:1.00px;height:126.00px;background:#e3e6ea"></div>
<div class="r" style="left:914.00px;top:290.00px;width:1.00px;height:126.00px;background:#e3e6ea"></div>
<div class="r" style="left:990.00px;top:290.00px;width:1.00px;height:126.00px;background:#e3e6ea"></div>
<div class="r" style="left:1066.00px;top:290.00px;width:1.00px;height:126.00px;background:#e3e6ea"></div>
<div class="r" style="left:1142.00px;top:290.00px;width:1.00px;height:126.00px;background:#e3e6ea"></div>
<div class="r" style="left:1217.00px;top:290.00px;width:1.00px;height:126.00px;background:#e3e6ea"></div>
<div class="r" style="left:1292.00px;top:290.00px;width:1.00px;height:126.00px;background:#e3e6ea"></div>
<div class="r" style="left:1368.00px;top:290.00px;width:1.00px;height:126.00px;background:#e3e6ea"></div>
<div class="r" style="left:1444.00px;top:290.00px;width:1.00px;height:126.00px;background:#e3e6ea"></div>
<div class="r" style="left:1520.00px;top:290.00px;width:1.00px;height:126.00px;background:#e3e6ea"></div>
<div class="r" style="left:35.00px;top:462.00px;width:350.50px;height:34.00px;background:#f3f4f6"></div>
<div class="t" style="left:58.00px;top:472.29px;font-size:13px;font-weight:400;-webkit-text-stroke:0.42px #374151;color:#374151;letter-spacing:0.868px;">Standard single</div>
<svg class="r" style="left:220px;top:475.9px" width="12" height="8" viewBox="0 0 12 8"><polyline points="2,1.8 6,5.8 10,1.8" fill="none" stroke="#374151" stroke-width="1.9" stroke-linecap="round" stroke-linejoin="round"/></svg>
<div class="t" style="left:261.00px;top:472.29px;font-size:13px;font-weight:400;-webkit-text-stroke:0.42px #374151;color:#374151;letter-spacing:1.066px;">Verfügbarkeit</div>
<div class="r" style="left:385.00px;top:462.00px;width:1211.00px;height:34.00px;background:#f3f4f6;border:1px solid #dde1e6;box-sizing:border-box"></div>
<div class="r" style="left:461.00px;top:462.00px;width:1.00px;height:34.00px;background:#dde1e6"></div>
<div class="r" style="left:537.00px;top:462.00px;width:1.00px;height:34.00px;background:#dde1e6"></div>
<div class="r" style="left:612.00px;top:462.00px;width:1.00px;height:34.00px;background:#dde1e6"></div>
<div class="r" style="left:687.00px;top:462.00px;width:1.00px;height:34.00px;background:#dde1e6"></div>
<div class="r" style="left:763.00px;top:462.00px;width:1.00px;height:34.00px;background:#dde1e6"></div>
<div class="r" style="left:838.00px;top:462.00px;width:1.00px;height:34.00px;background:#dde1e6"></div>
<div class="r" style="left:914.00px;top:462.00px;width:1.00px;height:34.00px;background:#dde1e6"></div>
<div class="r" style="left:990.00px;top:462.00px;width:1.00px;height:34.00px;background:#dde1e6"></div>
<div class="r" style="left:1066.00px;top:462.00px;width:1.00px;height:34.00px;background:#dde1e6"></div>
<div class="r" style="left:1142.00px;top:462.00px;width:1.00px;height:34.00px;background:#dde1e6"></div>
<div class="r" style="left:1217.00px;top:462.00px;width:1.00px;height:34.00px;background:#dde1e6"></div>
<div class="r" style="left:1292.00px;top:462.00px;width:1.00px;height:34.00px;background:#dde1e6"></div>
<div class="r" style="left:1368.00px;top:462.00px;width:1.00px;height:34.00px;background:#dde1e6"></div>
<div class="r" style="left:1444.00px;top:462.00px;width:1.00px;height:34.00px;background:#dde1e6"></div>
<div class="r" style="left:1520.00px;top:462.00px;width:1.00px;height:34.00px;background:#dde1e6"></div>
<div class="t" style="left:273.00px;width:300px;text-align:center;top:473.44px;font-size:12px;font-weight:400;-webkit-text-stroke:0.42px #374151;color:#374151;letter-spacing:0.000px;">26</div>
<div class="t" style="left:349.00px;width:300px;text-align:center;top:473.44px;font-size:12px;font-weight:400;-webkit-text-stroke:0.42px #374151;color:#374151;letter-spacing:0.000px;">26</div>
<div class="t" style="left:424.50px;width:300px;text-align:center;top:473.44px;font-size:12px;font-weight:400;-webkit-text-stroke:0.42px #374151;color:#374151;letter-spacing:0.000px;">26</div>
<div class="t" style="left:499.50px;width:300px;text-align:center;top:473.44px;font-size:12px;font-weight:400;-webkit-text-stroke:0.42px #374151;color:#374151;letter-spacing:0.000px;">26</div>
<div class="t" style="left:575.00px;width:300px;text-align:center;top:473.44px;font-size:12px;font-weight:400;-webkit-text-stroke:0.42px #374151;color:#374151;letter-spacing:0.000px;">26</div>
<div class="t" style="left:650.50px;width:300px;text-align:center;top:473.44px;font-size:12px;font-weight:400;-webkit-text-stroke:0.42px #374151;color:#374151;letter-spacing:0.000px;">26</div>
<div class="t" style="left:726.00px;width:300px;text-align:center;top:473.44px;font-size:12px;font-weight:400;-webkit-text-stroke:0.42px #374151;color:#374151;letter-spacing:0.000px;">26</div>
<div class="t" style="left:802.00px;width:300px;text-align:center;top:473.44px;font-size:12px;font-weight:400;-webkit-text-stroke:0.42px #374151;color:#374151;letter-spacing:0.000px;">26</div>
<div class="t" style="left:878.00px;width:300px;text-align:center;top:473.44px;font-size:12px;font-weight:400;-webkit-text-stroke:0.42px #374151;color:#374151;letter-spacing:0.000px;">26</div>
<div class="t" style="left:954.00px;width:300px;text-align:center;top:473.44px;font-size:12px;font-weight:400;-webkit-text-stroke:0.42px #374151;color:#374151;letter-spacing:0.000px;">26</div>
<div class="t" style="left:1029.50px;width:300px;text-align:center;top:473.44px;font-size:12px;font-weight:400;-webkit-text-stroke:0.42px #374151;color:#374151;letter-spacing:0.000px;">26</div>
<div class="t" style="left:1104.50px;width:300px;text-align:center;top:473.44px;font-size:12px;font-weight:400;-webkit-text-stroke:0.42px #374151;color:#374151;letter-spacing:0.000px;">26</div>
<div class="t" style="left:1180.00px;width:300px;text-align:center;top:473.44px;font-size:12px;font-weight:400;-webkit-text-stroke:0.42px #374151;color:#374151;letter-spacing:0.000px;">26</div>
<div class="t" style="left:1256.00px;width:300px;text-align:center;top:473.44px;font-size:12px;font-weight:400;-webkit-text-stroke:0.42px #374151;color:#374151;letter-spacing:0.000px;">26</div>
<div class="t" style="left:1332.00px;width:300px;text-align:center;top:473.44px;font-size:12px;font-weight:400;-webkit-text-stroke:0.42px #374151;color:#374151;letter-spacing:0.000px;">26</div>
<div class="t" style="left:1407.50px;width:300px;text-align:center;top:473.44px;font-size:12px;font-weight:400;-webkit-text-stroke:0.42px #374151;color:#374151;letter-spacing:0.000px;">26</div>
<div class="r" style="left:35.00px;top:509.00px;width:1560.00px;height:32.00px;background:#fff"></div>
<div class="t" style="left:59.00px;top:517.99px;font-size:13px;font-weight:400;color:#4b5563;letter-spacing:0.000px;letter-spacing:0.2px">DEFAULT</div>
<div class="t" style="left:261.40px;top:518.35px;font-size:14px;font-weight:400;color:#4b5563;letter-spacing:0.642px;">Preise</div>
<svg class="r" style="left:310.8px;top:523.8px" width="10" height="6" viewBox="0 0 10 6"><polygon points="0,0 8.4,0 4.2,4.8" fill="#374151"/></svg>
<div class="t" style="left:273.80px;width:300px;text-align:center;top:520.26px;font-size:11.5px;font-weight:400;color:#1eaa9f;letter-spacing:0.554px;">€400.00</div>
<div class="t" style="left:349.80px;width:300px;text-align:center;top:520.26px;font-size:11.5px;font-weight:400;color:#1eaa9f;letter-spacing:0.554px;">€400.00</div>
<div class="t" style="left:425.30px;width:300px;text-align:center;top:520.26px;font-size:11.5px;font-weight:400;color:#1eaa9f;letter-spacing:0.554px;">€300.00</div>
<div class="t" style="left:500.30px;width:300px;text-align:center;top:520.26px;font-size:11.5px;font-weight:400;color:#1eaa9f;letter-spacing:0.554px;">€200.00</div>
<div class="t" style="left:575.80px;width:300px;text-align:center;top:520.26px;font-size:11.5px;font-weight:400;color:#1eaa9f;letter-spacing:0.554px;">€400.00</div>
<div class="t" style="left:651.30px;width:300px;text-align:center;top:520.26px;font-size:11.5px;font-weight:400;color:#1eaa9f;letter-spacing:0.554px;">€400.00</div>
<div class="t" style="left:726.80px;width:300px;text-align:center;top:520.26px;font-size:11.5px;font-weight:400;color:#1eaa9f;letter-spacing:0.554px;">€400.00</div>
<div class="t" style="left:802.80px;width:300px;text-align:center;top:520.26px;font-size:11.5px;font-weight:400;color:#1eaa9f;letter-spacing:0.554px;">€400.00</div>
<div class="t" style="left:878.80px;width:300px;text-align:center;top:520.26px;font-size:11.5px;font-weight:400;color:#1eaa9f;letter-spacing:0.554px;">€400.00</div>
<div class="t" style="left:954.80px;width:300px;text-align:center;top:520.26px;font-size:11.5px;font-weight:400;color:#1eaa9f;letter-spacing:0.554px;">€400.00</div>
<div class="t" style="left:1030.30px;width:300px;text-align:center;top:520.26px;font-size:11.5px;font-weight:400;color:#1eaa9f;letter-spacing:0.554px;">€400.00</div>
<div class="t" style="left:1105.30px;width:300px;text-align:center;top:520.26px;font-size:11.5px;font-weight:400;color:#1eaa9f;letter-spacing:0.554px;">€200.00</div>
<div class="t" style="left:1180.80px;width:300px;text-align:center;top:520.26px;font-size:11.5px;font-weight:400;color:#1eaa9f;letter-spacing:0.554px;">€400.00</div>
<div class="t" style="left:1256.80px;width:300px;text-align:center;top:520.26px;font-size:11.5px;font-weight:400;color:#1eaa9f;letter-spacing:0.554px;">€400.00</div>
<div class="t" style="left:1332.80px;width:300px;text-align:center;top:520.26px;font-size:11.5px;font-weight:400;color:#1eaa9f;letter-spacing:0.554px;">€400.00</div>
<div class="t" style="left:1408.30px;width:300px;text-align:center;top:520.26px;font-size:11.5px;font-weight:400;color:#1eaa9f;letter-spacing:0.554px;">€400.00</div>
<div class="r" style="left:35.00px;top:541.00px;width:1560.00px;height:31.00px;background:#fff"></div>
<div class="t" style="left:59.00px;top:549.49px;font-size:13px;font-weight:400;color:#4b5563;letter-spacing:0.000px;letter-spacing:0.3px">RO</div>
<div class="t" style="left:261.40px;top:549.85px;font-size:14px;font-weight:400;color:#4b5563;letter-spacing:0.642px;">Preise</div>
<svg class="r" style="left:310.8px;top:555.3px" width="10" height="6" viewBox="0 0 10 6"><polygon points="0,0 8.4,0 4.2,4.8" fill="#374151"/></svg>
<svg class="r" style="left:364px;top:551px" width="13" height="13" viewBox="0 0 13 13"><path d="M3.2 3.0 A4.9 4.9 0 1 1 1.6 6.5" fill="none" stroke="#374151" stroke-width="1.2"/><polygon points="1.7,1.0 4.6,3.7 1.2,4.3" fill="#374151"/><polyline points="6.5,4.0 6.5,6.7 8.2,7.9" fill="none" stroke="#374151" stroke-width="1.05" stroke-linecap="round" stroke-linejoin="round"/></svg>
<div class="t" style="left:273.80px;width:300px;text-align:center;top:551.76px;font-size:11.5px;font-weight:400;color:#1eaa9f;letter-spacing:0.554px;">€400.00</div>
<div class="t" style="left:349.80px;width:300px;text-align:center;top:551.76px;font-size:11.5px;font-weight:400;color:#1eaa9f;letter-spacing:0.554px;">€400.00</div>
<div class="t" style="left:425.30px;width:300px;text-align:center;top:551.76px;font-size:11.5px;font-weight:400;color:#1eaa9f;letter-spacing:0.554px;">€300.00</div>
<div class="t" style="left:500.30px;width:300px;text-align:center;top:551.76px;font-size:11.5px;font-weight:400;color:#1eaa9f;letter-spacing:0.554px;">€200.00</div>
<div class="t" style="left:575.80px;width:300px;text-align:center;top:551.76px;font-size:11.5px;font-weight:400;color:#1eaa9f;letter-spacing:0.554px;">€400.00</div>
<div class="t" style="left:651.30px;width:300px;text-align:center;top:551.76px;font-size:11.5px;font-weight:400;color:#1eaa9f;letter-spacing:0.554px;">€400.00</div>
<div class="t" style="left:726.80px;width:300px;text-align:center;top:551.76px;font-size:11.5px;font-weight:400;color:#1eaa9f;letter-spacing:0.554px;">€400.00</div>
<div class="t" style="left:802.80px;width:300px;text-align:center;top:551.76px;font-size:11.5px;font-weight:400;color:#1eaa9f;letter-spacing:0.554px;">€400.00</div>
<div class="t" style="left:878.80px;width:300px;text-align:center;top:551.76px;font-size:11.5px;font-weight:400;color:#1eaa9f;letter-spacing:0.554px;">€400.00</div>
<div class="t" style="left:954.80px;width:300px;text-align:center;top:551.76px;font-size:11.5px;font-weight:400;color:#1eaa9f;letter-spacing:0.554px;">€400.00</div>
<div class="t" style="left:1030.30px;width:300px;text-align:center;top:551.76px;font-size:11.5px;font-weight:400;color:#1eaa9f;letter-spacing:0.554px;">€400.00</div>
<div class="t" style="left:1105.30px;width:300px;text-align:center;top:551.76px;font-size:11.5px;font-weight:400;color:#1eaa9f;letter-spacing:0.554px;">€200.00</div>
<div class="t" style="left:1180.80px;width:300px;text-align:center;top:551.76px;font-size:11.5px;font-weight:400;color:#1eaa9f;letter-spacing:0.554px;">€400.00</div>
<div class="t" style="left:1256.80px;width:300px;text-align:center;top:551.76px;font-size:11.5px;font-weight:400;color:#1eaa9f;letter-spacing:0.554px;">€400.00</div>
<div class="t" style="left:1332.80px;width:300px;text-align:center;top:551.76px;font-size:11.5px;font-weight:400;color:#1eaa9f;letter-spacing:0.554px;">€400.00</div>
<div class="t" style="left:1408.30px;width:300px;text-align:center;top:551.76px;font-size:11.5px;font-weight:400;color:#1eaa9f;letter-spacing:0.554px;">€400.00</div>
<div class="r" style="left:35.00px;top:572.00px;width:1560.00px;height:24.00px;background:#b6a1f8"></div>
<div class="r" style="left:35.50px;top:572.00px;width:8.50px;height:24.00px;background:#7550f6"></div>
<div class="t" style="left:58.30px;top:578.29px;font-size:11px;font-weight:400;-webkit-text-stroke:0.42px #3d3a52;color:#3d3a52;letter-spacing:0.913px;">Maximale Aufenthaltsdauer</div>
<svg class="r" style="left:220.5px;top:578.0px" width="12" height="12" viewBox="0 0 12 12"><circle cx="6" cy="6" r="5.1" fill="none" stroke="#4a2cf0" stroke-width="1.35"/><circle cx="6" cy="3.3" r="0.85" fill="#4a2cf0"/><rect x="5.3" y="4.9" width="1.4" height="4.5" rx="0.7" fill="#4a2cf0"/></svg>
<div class="t" style="left:273.00px;width:300px;text-align:center;top:578.89px;font-size:11px;font-weight:400;-webkit-text-stroke:0.42px #3d3a52;color:#3d3a52;letter-spacing:0.000px;">14</div>
<div class="t" style="left:349.00px;width:300px;text-align:center;top:578.89px;font-size:11px;font-weight:400;-webkit-text-stroke:0.42px #3d3a52;color:#3d3a52;letter-spacing:0.000px;">14</div>
<div class="t" style="left:424.50px;width:300px;text-align:center;top:578.89px;font-size:11px;font-weight:400;-webkit-text-stroke:0.42px #3d3a52;color:#3d3a52;letter-spacing:0.000px;">14</div>
<div class="t" style="left:499.50px;width:300px;text-align:center;top:578.89px;font-size:11px;font-weight:400;-webkit-text-stroke:0.42px #3d3a52;color:#3d3a52;letter-spacing:0.000px;">14</div>
<div class="t" style="left:575.00px;width:300px;text-align:center;top:578.89px;font-size:11px;font-weight:400;-webkit-text-stroke:0.42px #3d3a52;color:#3d3a52;letter-spacing:0.000px;">14</div>
<div class="t" style="left:650.50px;width:300px;text-align:center;top:578.89px;font-size:11px;font-weight:400;-webkit-text-stroke:0.42px #3d3a52;color:#3d3a52;letter-spacing:0.000px;">-</div>
<div class="t" style="left:726.00px;width:300px;text-align:center;top:578.89px;font-size:11px;font-weight:400;-webkit-text-stroke:0.42px #3d3a52;color:#3d3a52;letter-spacing:0.000px;">-</div>
<div class="t" style="left:802.00px;width:300px;text-align:center;top:578.89px;font-size:11px;font-weight:400;-webkit-text-stroke:0.42px #3d3a52;color:#3d3a52;letter-spacing:0.000px;">-</div>
<div class="t" style="left:878.00px;width:300px;text-align:center;top:578.89px;font-size:11px;font-weight:400;-webkit-text-stroke:0.42px #3d3a52;color:#3d3a52;letter-spacing:0.000px;">-</div>
<div class="t" style="left:954.00px;width:300px;text-align:center;top:578.89px;font-size:11px;font-weight:400;-webkit-text-stroke:0.42px #3d3a52;color:#3d3a52;letter-spacing:0.000px;">-</div>
<div class="t" style="left:1029.50px;width:300px;text-align:center;top:578.89px;font-size:11px;font-weight:400;-webkit-text-stroke:0.42px #3d3a52;color:#3d3a52;letter-spacing:0.000px;">-</div>
<div class="t" style="left:1104.50px;width:300px;text-align:center;top:578.89px;font-size:11px;font-weight:400;-webkit-text-stroke:0.42px #3d3a52;color:#3d3a52;letter-spacing:0.000px;">-</div>
<div class="t" style="left:1180.00px;width:300px;text-align:center;top:578.89px;font-size:11px;font-weight:400;-webkit-text-stroke:0.42px #3d3a52;color:#3d3a52;letter-spacing:0.000px;">-</div>
<div class="t" style="left:1256.00px;width:300px;text-align:center;top:578.89px;font-size:11px;font-weight:400;-webkit-text-stroke:0.42px #3d3a52;color:#3d3a52;letter-spacing:0.000px;">-</div>
<div class="t" style="left:1332.00px;width:300px;text-align:center;top:578.89px;font-size:11px;font-weight:400;-webkit-text-stroke:0.42px #3d3a52;color:#3d3a52;letter-spacing:0.000px;">-</div>
<div class="t" style="left:1407.50px;width:300px;text-align:center;top:578.89px;font-size:11px;font-weight:400;-webkit-text-stroke:0.42px #3d3a52;color:#3d3a52;letter-spacing:0.000px;">-</div>
<div class="r" style="left:35.00px;top:596.00px;width:1560.00px;height:24.50px;background:#b6a1f8"></div>
<div class="r" style="left:35.50px;top:596.00px;width:8.50px;height:24.50px;background:#7550f6"></div>
<div class="t" style="left:58.30px;top:602.54px;font-size:11px;font-weight:400;-webkit-text-stroke:0.42px #3d3a52;color:#3d3a52;letter-spacing:0.929px;">Mindestaufenthaltsdauer</div>
<svg class="r" style="left:206.5px;top:602.77px" width="12" height="12" viewBox="0 0 12 12"><circle cx="6" cy="6" r="5.1" fill="none" stroke="#4a2cf0" stroke-width="1.35"/><circle cx="6" cy="3.3" r="0.85" fill="#4a2cf0"/><rect x="5.3" y="4.9" width="1.4" height="4.5" rx="0.7" fill="#4a2cf0"/></svg>
<div class="t" style="left:273.00px;width:300px;text-align:center;top:604.44px;font-size:11px;font-weight:400;-webkit-text-stroke:0.42px #3d3a52;color:#3d3a52;letter-spacing:0.000px;">3</div>
<div class="t" style="left:349.00px;width:300px;text-align:center;top:604.44px;font-size:11px;font-weight:400;-webkit-text-stroke:0.42px #3d3a52;color:#3d3a52;letter-spacing:0.000px;">3</div>
<div class="t" style="left:424.50px;width:300px;text-align:center;top:604.44px;font-size:11px;font-weight:400;-webkit-text-stroke:0.42px #3d3a52;color:#3d3a52;letter-spacing:0.000px;">3</div>
<div class="t" style="left:499.50px;width:300px;text-align:center;top:604.44px;font-size:11px;font-weight:400;-webkit-text-stroke:0.42px #3d3a52;color:#3d3a52;letter-spacing:0.000px;">3</div>
<div class="t" style="left:575.00px;width:300px;text-align:center;top:604.44px;font-size:11px;font-weight:400;-webkit-text-stroke:0.42px #3d3a52;color:#3d3a52;letter-spacing:0.000px;">3</div>
<div class="t" style="left:650.50px;width:300px;text-align:center;top:604.44px;font-size:11px;font-weight:400;-webkit-text-stroke:0.42px #3d3a52;color:#3d3a52;letter-spacing:0.000px;">-</div>
<div class="t" style="left:726.00px;width:300px;text-align:center;top:604.44px;font-size:11px;font-weight:400;-webkit-text-stroke:0.42px #3d3a52;color:#3d3a52;letter-spacing:0.000px;">-</div>
<div class="t" style="left:802.00px;width:300px;text-align:center;top:604.44px;font-size:11px;font-weight:400;-webkit-text-stroke:0.42px #3d3a52;color:#3d3a52;letter-spacing:0.000px;">-</div>
<div class="t" style="left:878.00px;width:300px;text-align:center;top:604.44px;font-size:11px;font-weight:400;-webkit-text-stroke:0.42px #3d3a52;color:#3d3a52;letter-spacing:0.000px;">-</div>
<div class="t" style="left:954.00px;width:300px;text-align:center;top:604.44px;font-size:11px;font-weight:400;-webkit-text-stroke:0.42px #3d3a52;color:#3d3a52;letter-spacing:0.000px;">-</div>
<div class="t" style="left:1029.50px;width:300px;text-align:center;top:604.44px;font-size:11px;font-weight:400;-webkit-text-stroke:0.42px #3d3a52;color:#3d3a52;letter-spacing:0.000px;">-</div>
<div class="t" style="left:1104.50px;width:300px;text-align:center;top:604.44px;font-size:11px;font-weight:400;-webkit-text-stroke:0.42px #3d3a52;color:#3d3a52;letter-spacing:0.000px;">-</div>
<div class="t" style="left:1180.00px;width:300px;text-align:center;top:604.44px;font-size:11px;font-weight:400;-webkit-text-stroke:0.42px #3d3a52;color:#3d3a52;letter-spacing:0.000px;">-</div>
<div class="t" style="left:1256.00px;width:300px;text-align:center;top:604.44px;font-size:11px;font-weight:400;-webkit-text-stroke:0.42px #3d3a52;color:#3d3a52;letter-spacing:0.000px;">-</div>
<div class="t" style="left:1332.00px;width:300px;text-align:center;top:604.44px;font-size:11px;font-weight:400;-webkit-text-stroke:0.42px #3d3a52;color:#3d3a52;letter-spacing:0.000px;">-</div>
<div class="t" style="left:1407.50px;width:300px;text-align:center;top:604.44px;font-size:11px;font-weight:400;-webkit-text-stroke:0.42px #3d3a52;color:#3d3a52;letter-spacing:0.000px;">-</div>
<div class="r" style="left:35.00px;top:620.50px;width:1560.00px;height:31.50px;background:#fff"></div>
<div class="t" style="left:59.00px;top:629.24px;font-size:13px;font-weight:400;color:#4b5563;letter-spacing:0.000px;letter-spacing:0.8px">BB</div>
<div class="t" style="left:261.40px;top:629.60px;font-size:14px;font-weight:400;color:#4b5563;letter-spacing:0.642px;">Preise</div>
<svg class="r" style="left:310.8px;top:635.05px" width="10" height="6" viewBox="0 0 10 6"><polygon points="0,0 8.4,0 4.2,4.8" fill="#374151"/></svg>
<svg class="r" style="left:364px;top:631px" width="13" height="13" viewBox="0 0 13 13"><path d="M3.2 3.0 A4.9 4.9 0 1 1 1.6 6.5" fill="none" stroke="#374151" stroke-width="1.2"/><polygon points="1.7,1.0 4.6,3.7 1.2,4.3" fill="#374151"/><polyline points="6.5,4.0 6.5,6.7 8.2,7.9" fill="none" stroke="#374151" stroke-width="1.05" stroke-linecap="round" stroke-linejoin="round"/></svg>
<div class="t" style="left:273.80px;width:300px;text-align:center;top:631.51px;font-size:11.5px;font-weight:400;color:#1eaa9f;letter-spacing:0.554px;">€400.00</div>
<div class="t" style="left:349.80px;width:300px;text-align:center;top:631.51px;font-size:11.5px;font-weight:400;color:#1eaa9f;letter-spacing:0.554px;">€400.00</div>
<div class="t" style="left:425.30px;width:300px;text-align:center;top:631.51px;font-size:11.5px;font-weight:400;color:#1eaa9f;letter-spacing:0.554px;">€300.00</div>
<div class="t" style="left:500.30px;width:300px;text-align:center;top:631.51px;font-size:11.5px;font-weight:400;color:#1eaa9f;letter-spacing:0.554px;">€200.00</div>
<div class="t" style="left:575.80px;width:300px;text-align:center;top:631.51px;font-size:11.5px;font-weight:400;color:#1eaa9f;letter-spacing:0.554px;">€400.00</div>
<div class="t" style="left:651.30px;width:300px;text-align:center;top:631.51px;font-size:11.5px;font-weight:400;color:#1eaa9f;letter-spacing:0.554px;">€400.00</div>
<div class="t" style="left:726.80px;width:300px;text-align:center;top:631.51px;font-size:11.5px;font-weight:400;color:#1eaa9f;letter-spacing:0.554px;">€400.00</div>
<div class="t" style="left:802.80px;width:300px;text-align:center;top:631.51px;font-size:11.5px;font-weight:400;color:#1eaa9f;letter-spacing:0.554px;">€400.00</div>
<div class="t" style="left:878.80px;width:300px;text-align:center;top:631.51px;font-size:11.5px;font-weight:400;color:#1eaa9f;letter-spacing:0.554px;">€400.00</div>
<div class="t" style="left:954.80px;width:300px;text-align:center;top:631.51px;font-size:11.5px;font-weight:400;color:#1eaa9f;letter-spacing:0.554px;">€400.00</div>
<div class="t" style="left:1030.30px;width:300px;text-align:center;top:631.51px;font-size:11.5px;font-weight:400;color:#1eaa9f;letter-spacing:0.554px;">€400.00</div>
<div class="t" style="left:1105.30px;width:300px;text-align:center;top:631.51px;font-size:11.5px;font-weight:400;color:#1eaa9f;letter-spacing:0.554px;">€200.00</div>
<div class="t" style="left:1180.80px;width:300px;text-align:center;top:631.51px;font-size:11.5px;font-weight:400;color:#1eaa9f;letter-spacing:0.554px;">€400.00</div>
<div class="t" style="left:1256.80px;width:300px;text-align:center;top:631.51px;font-size:11.5px;font-weight:400;color:#1eaa9f;letter-spacing:0.554px;">€400.00</div>
<div class="t" style="left:1332.80px;width:300px;text-align:center;top:631.51px;font-size:11.5px;font-weight:400;color:#1eaa9f;letter-spacing:0.554px;">€400.00</div>
<div class="t" style="left:1408.30px;width:300px;text-align:center;top:631.51px;font-size:11.5px;font-weight:400;color:#1eaa9f;letter-spacing:0.554px;">€400.00</div>
<div class="r" style="left:35.00px;top:652.00px;width:1560.00px;height:25.00px;background:#b6a1f8"></div>
<div class="r" style="left:35.50px;top:652.00px;width:8.50px;height:25.00px;background:#7550f6"></div>
<div class="t" style="left:58.30px;top:658.79px;font-size:11px;font-weight:400;-webkit-text-stroke:0.42px #3d3a52;color:#3d3a52;letter-spacing:0.913px;">Maximale Aufenthaltsdauer</div>
<svg class="r" style="left:220.5px;top:658.5px" width="12" height="12" viewBox="0 0 12 12"><circle cx="6" cy="6" r="5.1" fill="none" stroke="#4a2cf0" stroke-width="1.35"/><circle cx="6" cy="3.3" r="0.85" fill="#4a2cf0"/><rect x="5.3" y="4.9" width="1.4" height="4.5" rx="0.7" fill="#4a2cf0"/></svg>
<div class="t" style="left:273.00px;width:300px;text-align:center;top:659.39px;font-size:11px;font-weight:400;-webkit-text-stroke:0.42px #3d3a52;color:#3d3a52;letter-spacing:0.000px;">14</div>
<div class="t" style="left:349.00px;width:300px;text-align:center;top:659.39px;font-size:11px;font-weight:400;-webkit-text-stroke:0.42px #3d3a52;color:#3d3a52;letter-spacing:0.000px;">14</div>
<div class="t" style="left:424.50px;width:300px;text-align:center;top:659.39px;font-size:11px;font-weight:400;-webkit-text-stroke:0.42px #3d3a52;color:#3d3a52;letter-spacing:0.000px;">14</div>
<div class="t" style="left:499.50px;width:300px;text-align:center;top:659.39px;font-size:11px;font-weight:400;-webkit-text-stroke:0.42px #3d3a52;color:#3d3a52;letter-spacing:0.000px;">14</div>
<div class="t" style="left:575.00px;width:300px;text-align:center;top:659.39px;font-size:11px;font-weight:400;-webkit-text-stroke:0.42px #3d3a52;color:#3d3a52;letter-spacing:0.000px;">14</div>
<div class="t" style="left:650.50px;width:300px;text-align:center;top:659.39px;font-size:11px;font-weight:400;-webkit-text-stroke:0.42px #3d3a52;color:#3d3a52;letter-spacing:0.000px;">-</div>
<div class="t" style="left:726.00px;width:300px;text-align:center;top:659.39px;font-size:11px;font-weight:400;-webkit-text-stroke:0.42px #3d3a52;color:#3d3a52;letter-spacing:0.000px;">-</div>
<div class="t" style="left:802.00px;width:300px;text-align:center;top:659.39px;font-size:11px;font-weight:400;-webkit-text-stroke:0.42px #3d3a52;color:#3d3a52;letter-spacing:0.000px;">-</div>
<div class="t" style="left:878.00px;width:300px;text-align:center;top:659.39px;font-size:11px;font-weight:400;-webkit-text-stroke:0.42px #3d3a52;color:#3d3a52;letter-spacing:0.000px;">-</div>
<div class="t" style="left:954.00px;width:300px;text-align:center;top:659.39px;font-size:11px;font-weight:400;-webkit-text-stroke:0.42px #3d3a52;color:#3d3a52;letter-spacing:0.000px;">-</div>
<div class="t" style="left:1029.50px;width:300px;text-align:center;top:659.39px;font-size:11px;font-weight:400;-webkit-text-stroke:0.42px #3d3a52;color:#3d3a52;letter-spacing:0.000px;">-</div>
<div class="t" style="left:1104.50px;width:300px;text-align:center;top:659.39px;font-size:11px;font-weight:400;-webkit-text-stroke:0.42px #3d3a52;color:#3d3a52;letter-spacing:0.000px;">-</div>
<div class="t" style="left:1180.00px;width:300px;text-align:center;top:659.39px;font-size:11px;font-weight:400;-webkit-text-stroke:0.42px #3d3a52;color:#3d3a52;letter-spacing:0.000px;">-</div>
<div class="t" style="left:1256.00px;width:300px;text-align:center;top:659.39px;font-size:11px;font-weight:400;-webkit-text-stroke:0.42px #3d3a52;color:#3d3a52;letter-spacing:0.000px;">-</div>
<div class="t" style="left:1332.00px;width:300px;text-align:center;top:659.39px;font-size:11px;font-weight:400;-webkit-text-stroke:0.42px #3d3a52;color:#3d3a52;letter-spacing:0.000px;">-</div>
<div class="t" style="left:1407.50px;width:300px;text-align:center;top:659.39px;font-size:11px;font-weight:400;-webkit-text-stroke:0.42px #3d3a52;color:#3d3a52;letter-spacing:0.000px;">-</div>
<div class="r" style="left:35.00px;top:677.00px;width:1560.00px;height:24.00px;background:#b6a1f8"></div>
<div class="r" style="left:35.50px;top:677.00px;width:8.50px;height:24.00px;background:#7550f6"></div>
<div class="t" style="left:58.30px;top:683.29px;font-size:11px;font-weight:400;-webkit-text-stroke:0.42px #3d3a52;color:#3d3a52;letter-spacing:0.929px;">Mindestaufenthaltsdauer</div>
<svg class="r" style="left:206.5px;top:683.52px" width="12" height="12" viewBox="0 0 12 12"><circle cx="6" cy="6" r="5.1" fill="none" stroke="#4a2cf0" stroke-width="1.35"/><circle cx="6" cy="3.3" r="0.85" fill="#4a2cf0"/><rect x="5.3" y="4.9" width="1.4" height="4.5" rx="0.7" fill="#4a2cf0"/></svg>
<div class="t" style="left:273.00px;width:300px;text-align:center;top:685.19px;font-size:11px;font-weight:400;-webkit-text-stroke:0.42px #3d3a52;color:#3d3a52;letter-spacing:0.000px;">3</div>
<div class="t" style="left:349.00px;width:300px;text-align:center;top:685.19px;font-size:11px;font-weight:400;-webkit-text-stroke:0.42px #3d3a52;color:#3d3a52;letter-spacing:0.000px;">3</div>
<div class="t" style="left:424.50px;width:300px;text-align:center;top:685.19px;font-size:11px;font-weight:400;-webkit-text-stroke:0.42px #3d3a52;color:#3d3a52;letter-spacing:0.000px;">3</div>
<div class="t" style="left:499.50px;width:300px;text-align:center;top:685.19px;font-size:11px;font-weight:400;-webkit-text-stroke:0.42px #3d3a52;color:#3d3a52;letter-spacing:0.000px;">3</div>
<div class="t" style="left:575.00px;width:300px;text-align:center;top:685.19px;font-size:11px;font-weight:400;-webkit-text-stroke:0.42px #3d3a52;color:#3d3a52;letter-spacing:0.000px;">3</div>
<div class="t" style="left:650.50px;width:300px;text-align:center;top:685.19px;font-size:11px;font-weight:400;-webkit-text-stroke:0.42px #3d3a52;color:#3d3a52;letter-spacing:0.000px;">-</div>
<div class="t" style="left:726.00px;width:300px;text-align:center;top:685.19px;font-size:11px;font-weight:400;-webkit-text-stroke:0.42px #3d3a52;color:#3d3a52;letter-spacing:0.000px;">-</div>
<div class="t" style="left:802.00px;width:300px;text-align:center;top:685.19px;font-size:11px;font-weight:400;-webkit-text-stroke:0.42px #3d3a52;color:#3d3a52;letter-spacing:0.000px;">-</div>
<div class="t" style="left:878.00px;width:300px;text-align:center;top:685.19px;font-size:11px;font-weight:400;-webkit-text-stroke:0.42px #3d3a52;color:#3d3a52;letter-spacing:0.000px;">-</div>
<div class="t" style="left:954.00px;width:300px;text-align:center;top:685.19px;font-size:11px;font-weight:400;-webkit-text-stroke:0.42px #3d3a52;color:#3d3a52;letter-spacing:0.000px;">-</div>
<div class="t" style="left:1029.50px;width:300px;text-align:center;top:685.19px;font-size:11px;font-weight:400;-webkit-text-stroke:0.42px #3d3a52;color:#3d3a52;letter-spacing:0.000px;">-</div>
<div class="t" style="left:1104.50px;width:300px;text-align:center;top:685.19px;font-size:11px;font-weight:400;-webkit-text-stroke:0.42px #3d3a52;color:#3d3a52;letter-spacing:0.000px;">-</div>
<div class="t" style="left:1180.00px;width:300px;text-align:center;top:685.19px;font-size:11px;font-weight:400;-webkit-text-stroke:0.42px #3d3a52;color:#3d3a52;letter-spacing:0.000px;">-</div>
<div class="t" style="left:1256.00px;width:300px;text-align:center;top:685.19px;font-size:11px;font-weight:400;-webkit-text-stroke:0.42px #3d3a52;color:#3d3a52;letter-spacing:0.000px;">-</div>
<div class="t" style="left:1332.00px;width:300px;text-align:center;top:685.19px;font-size:11px;font-weight:400;-webkit-text-stroke:0.42px #3d3a52;color:#3d3a52;letter-spacing:0.000px;">-</div>
<div class="t" style="left:1407.50px;width:300px;text-align:center;top:685.19px;font-size:11px;font-weight:400;-webkit-text-stroke:0.42px #3d3a52;color:#3d3a52;letter-spacing:0.000px;">-</div>
<div class="r" style="left:35.00px;top:701.00px;width:1560.00px;height:32.00px;background:#fff"></div>
<div class="t" style="left:59.00px;top:709.99px;font-size:13px;font-weight:400;color:#4b5563;letter-spacing:0.000px;letter-spacing:0.8px">BB</div>
<div class="t" style="left:261.40px;top:710.35px;font-size:14px;font-weight:400;color:#4b5563;letter-spacing:0.642px;">Preise</div>
<svg class="r" style="left:310.8px;top:715.8px" width="10" height="6" viewBox="0 0 10 6"><polygon points="0,0 8.4,0 4.2,4.8" fill="#374151"/></svg>
<div class="t" style="left:273.80px;width:300px;text-align:center;top:712.26px;font-size:11.5px;font-weight:400;color:#1eaa9f;letter-spacing:0.554px;">€400.00</div>
<div class="t" style="left:349.80px;width:300px;text-align:center;top:712.26px;font-size:11.5px;font-weight:400;color:#1eaa9f;letter-spacing:0.554px;">€400.00</div>
<div class="t" style="left:425.30px;width:300px;text-align:center;top:712.26px;font-size:11.5px;font-weight:400;color:#1eaa9f;letter-spacing:0.554px;">€300.00</div>
<div class="t" style="left:500.30px;width:300px;text-align:center;top:712.26px;font-size:11.5px;font-weight:400;color:#1eaa9f;letter-spacing:0.554px;">€200.00</div>
<div class="t" style="left:575.80px;width:300px;text-align:center;top:712.26px;font-size:11.5px;font-weight:400;color:#1eaa9f;letter-spacing:0.554px;">€400.00</div>
<div class="t" style="left:651.30px;width:300px;text-align:center;top:712.26px;font-size:11.5px;font-weight:400;color:#1eaa9f;letter-spacing:0.554px;">€400.00</div>
<div class="t" style="left:726.80px;width:300px;text-align:center;top:712.26px;font-size:11.5px;font-weight:400;color:#1eaa9f;letter-spacing:0.554px;">€400.00</div>
<div class="t" style="left:802.80px;width:300px;text-align:center;top:712.26px;font-size:11.5px;font-weight:400;color:#1eaa9f;letter-spacing:0.554px;">€400.00</div>
<div class="t" style="left:878.80px;width:300px;text-align:center;top:712.26px;font-size:11.5px;font-weight:400;color:#1eaa9f;letter-spacing:0.554px;">€400.00</div>
<div class="t" style="left:954.80px;width:300px;text-align:center;top:712.26px;font-size:11.5px;font-weight:400;color:#1eaa9f;letter-spacing:0.554px;">€400.00</div>
<div class="t" style="left:1030.30px;width:300px;text-align:center;top:712.26px;font-size:11.5px;font-weight:400;color:#1eaa9f;letter-spacing:0.554px;">€400.00</div>
<div class="t" style="left:1105.30px;width:300px;text-align:center;top:712.26px;font-size:11.5px;font-weight:400;color:#1eaa9f;letter-spacing:0.554px;">€200.00</div>
<div class="t" style="left:1180.80px;width:300px;text-align:center;top:712.26px;font-size:11.5px;font-weight:400;color:#1eaa9f;letter-spacing:0.554px;">€400.00</div>
<div class="t" style="left:1256.80px;width:300px;text-align:center;top:712.26px;font-size:11.5px;font-weight:400;color:#1eaa9f;letter-spacing:0.554px;">€400.00</div>
<div class="t" style="left:1332.80px;width:300px;text-align:center;top:712.26px;font-size:11.5px;font-weight:400;color:#1eaa9f;letter-spacing:0.554px;">€400.00</div>
<div class="t" style="left:1408.30px;width:300px;text-align:center;top:712.26px;font-size:11.5px;font-weight:400;color:#1eaa9f;letter-spacing:0.554px;">€400.00</div>
<div class="r" style="left:35.00px;top:509.00px;width:1561.00px;height:1.00px;background:#e3e6ea"></div>
<div class="r" style="left:35.00px;top:541.00px;width:1561.00px;height:1.00px;background:#e3e6ea"></div>
<div class="r" style="left:35.00px;top:509.00px;width:1.00px;height:32.00px;background:#e3e6ea"></div>
<div class="r" style="left:250.00px;top:509.00px;width:1.00px;height:32.00px;background:#e3e6ea"></div>
<div class="r" style="left:385.00px;top:509.00px;width:1.00px;height:32.00px;background:#e3e6ea"></div>
<div class="r" style="left:461.00px;top:509.00px;width:1.00px;height:32.00px;background:#e3e6ea"></div>
<div class="r" style="left:537.00px;top:509.00px;width:1.00px;height:32.00px;background:#e3e6ea"></div>
<div class="r" style="left:612.00px;top:509.00px;width:1.00px;height:32.00px;background:#e3e6ea"></div>
<div class="r" style="left:687.00px;top:509.00px;width:1.00px;height:32.00px;background:#e3e6ea"></div>
<div class="r" style="left:763.00px;top:509.00px;width:1.00px;height:32.00px;background:#e3e6ea"></div>
<div class="r" style="left:838.00px;top:509.00px;width:1.00px;height:32.00px;background:#e3e6ea"></div>
<div class="r" style="left:914.00px;top:509.00px;width:1.00px;height:32.00px;background:#e3e6ea"></div>
<div class="r" style="left:990.00px;top:509.00px;width:1.00px;height:32.00px;background:#e3e6ea"></div>
<div class="r" style="left:1066.00px;top:509.00px;width:1.00px;height:32.00px;background:#e3e6ea"></div>
<div class="r" style="left:1142.00px;top:509.00px;width:1.00px;height:32.00px;background:#e3e6ea"></div>
<div class="r" style="left:1217.00px;top:509.00px;width:1.00px;height:32.00px;background:#e3e6ea"></div>
<div class="r" style="left:1292.00px;top:509.00px;width:1.00px;height:32.00px;background:#e3e6ea"></div>
<div class="r" style="left:1368.00px;top:509.00px;width:1.00px;height:32.00px;background:#e3e6ea"></div>
<div class="r" style="left:1444.00px;top:509.00px;width:1.00px;height:32.00px;background:#e3e6ea"></div>
<div class="r" style="left:1520.00px;top:509.00px;width:1.00px;height:32.00px;background:#e3e6ea"></div>
<div class="r" style="left:1595.00px;top:509.00px;width:1.00px;height:32.00px;background:#e3e6ea"></div>
<div class="r" style="left:35.00px;top:541.00px;width:1561.00px;height:1.00px;background:#e3e6ea"></div>
<div class="r" style="left:35.00px;top:572.00px;width:1561.00px;height:1.00px;background:#e3e6ea"></div>
<div class="r" style="left:35.00px;top:541.00px;width:1.00px;height:31.00px;background:#e3e6ea"></div>
<div class="r" style="left:250.00px;top:541.00px;width:1.00px;height:31.00px;background:#e3e6ea"></div>
<div class="r" style="left:385.00px;top:541.00px;width:1.00px;height:31.00px;background:#e3e6ea"></div>
<div class="r" style="left:461.00px;top:541.00px;width:1.00px;height:31.00px;background:#e3e6ea"></div>
<div class="r" style="left:537.00px;top:541.00px;width:1.00px;height:31.00px;background:#e3e6ea"></div>
<div class="r" style="left:612.00px;top:541.00px;width:1.00px;height:31.00px;background:#e3e6ea"></div>
<div class="r" style="left:687.00px;top:541.00px;width:1.00px;height:31.00px;background:#e3e6ea"></div>
<div class="r" style="left:763.00px;top:541.00px;width:1.00px;height:31.00px;background:#e3e6ea"></div>
<div class="r" style="left:838.00px;top:541.00px;width:1.00px;height:31.00px;background:#e3e6ea"></div>
<div class="r" style="left:914.00px;top:541.00px;width:1.00px;height:31.00px;background:#e3e6ea"></div>
<div class="r" style="left:990.00px;top:541.00px;width:1.00px;height:31.00px;background:#e3e6ea"></div>
<div class="r" style="left:1066.00px;top:541.00px;width:1.00px;height:31.00px;background:#e3e6ea"></div>
<div class="r" style="left:1142.00px;top:541.00px;width:1.00px;height:31.00px;background:#e3e6ea"></div>
<div class="r" style="left:1217.00px;top:541.00px;width:1.00px;height:31.00px;background:#e3e6ea"></div>
<div class="r" style="left:1292.00px;top:541.00px;width:1.00px;height:31.00px;background:#e3e6ea"></div>
<div class="r" style="left:1368.00px;top:541.00px;width:1.00px;height:31.00px;background:#e3e6ea"></div>
<div class="r" style="left:1444.00px;top:541.00px;width:1.00px;height:31.00px;background:#e3e6ea"></div>
<div class="r" style="left:1520.00px;top:541.00px;width:1.00px;height:31.00px;background:#e3e6ea"></div>
<div class="r" style="left:1595.00px;top:541.00px;width:1.00px;height:31.00px;background:#e3e6ea"></div>
<div class="r" style="left:35.00px;top:572.00px;width:1561.00px;height:1.00px;background:#a894ee"></div>
<div class="r" style="left:385.00px;top:572.00px;width:1.00px;height:24.00px;background:#ae9cf2"></div>
<div class="r" style="left:461.00px;top:572.00px;width:1.00px;height:24.00px;background:#ae9cf2"></div>
<div class="r" style="left:537.00px;top:572.00px;width:1.00px;height:24.00px;background:#ae9cf2"></div>
<div class="r" style="left:612.00px;top:572.00px;width:1.00px;height:24.00px;background:#ae9cf2"></div>
<div class="r" style="left:687.00px;top:572.00px;width:1.00px;height:24.00px;background:#ae9cf2"></div>
<div class="r" style="left:763.00px;top:572.00px;width:1.00px;height:24.00px;background:#ae9cf2"></div>
<div class="r" style="left:838.00px;top:572.00px;width:1.00px;height:24.00px;background:#ae9cf2"></div>
<div class="r" style="left:914.00px;top:572.00px;width:1.00px;height:24.00px;background:#ae9cf2"></div>
<div class="r" style="left:990.00px;top:572.00px;width:1.00px;height:24.00px;background:#ae9cf2"></div>
<div class="r" style="left:1066.00px;top:572.00px;width:1.00px;height:24.00px;background:#ae9cf2"></div>
<div class="r" style="left:1142.00px;top:572.00px;width:1.00px;height:24.00px;background:#ae9cf2"></div>
<div class="r" style="left:1217.00px;top:572.00px;width:1.00px;height:24.00px;background:#ae9cf2"></div>
<div class="r" style="left:1292.00px;top:572.00px;width:1.00px;height:24.00px;background:#ae9cf2"></div>
<div class="r" style="left:1368.00px;top:572.00px;width:1.00px;height:24.00px;background:#ae9cf2"></div>
<div class="r" style="left:1444.00px;top:572.00px;width:1.00px;height:24.00px;background:#ae9cf2"></div>
<div class="r" style="left:1520.00px;top:572.00px;width:1.00px;height:24.00px;background:#ae9cf2"></div>
<div class="r" style="left:1595.00px;top:572.00px;width:1.00px;height:24.00px;background:#ae9cf2"></div>
<div class="r" style="left:35.00px;top:596.00px;width:1561.00px;height:1.00px;background:#a894ee"></div>
<div class="r" style="left:385.00px;top:596.00px;width:1.00px;height:24.50px;background:#ae9cf2"></div>
<div class="r" style="left:461.00px;top:596.00px;width:1.00px;height:24.50px;background:#ae9cf2"></div>
<div class="r" style="left:537.00px;top:596.00px;width:1.00px;height:24.50px;background:#ae9cf2"></div>
<div class="r" style="left:612.00px;top:596.00px;width:1.00px;height:24.50px;background:#ae9cf2"></div>
<div class="r" style="left:687.00px;top:596.00px;width:1.00px;height:24.50px;background:#ae9cf2"></div>
<div class="r" style="left:763.00px;top:596.00px;width:1.00px;height:24.50px;background:#ae9cf2"></div>
<div class="r" style="left:838.00px;top:596.00px;width:1.00px;height:24.50px;background:#ae9cf2"></div>
<div class="r" style="left:914.00px;top:596.00px;width:1.00px;height:24.50px;background:#ae9cf2"></div>
<div class="r" style="left:990.00px;top:596.00px;width:1.00px;height:24.50px;background:#ae9cf2"></div>
<div class="r" style="left:1066.00px;top:596.00px;width:1.00px;height:24.50px;background:#ae9cf2"></div>
<div class="r" style="left:1142.00px;top:596.00px;width:1.00px;height:24.50px;background:#ae9cf2"></div>
<div class="r" style="left:1217.00px;top:596.00px;width:1.00px;height:24.50px;background:#ae9cf2"></div>
<div class="r" style="left:1292.00px;top:596.00px;width:1.00px;height:24.50px;background:#ae9cf2"></div>
<div class="r" style="left:1368.00px;top:596.00px;width:1.00px;height:24.50px;background:#ae9cf2"></div>
<div class="r" style="left:1444.00px;top:596.00px;width:1.00px;height:24.50px;background:#ae9cf2"></div>
<div class="r" style="left:1520.00px;top:596.00px;width:1.00px;height:24.50px;background:#ae9cf2"></div>
<div class="r" style="left:1595.00px;top:596.00px;width:1.00px;height:24.50px;background:#ae9cf2"></div>
<div class="r" style="left:35.00px;top:620.00px;width:1561.00px;height:1.00px;background:#e3e6ea"></div>
<div class="r" style="left:35.00px;top:652.00px;width:1561.00px;height:1.00px;background:#e3e6ea"></div>
<div class="r" style="left:35.00px;top:620.50px;width:1.00px;height:31.50px;background:#e3e6ea"></div>
<div class="r" style="left:250.00px;top:620.50px;width:1.00px;height:31.50px;background:#e3e6ea"></div>
<div class="r" style="left:385.00px;top:620.50px;width:1.00px;height:31.50px;background:#e3e6ea"></div>
<div class="r" style="left:461.00px;top:620.50px;width:1.00px;height:31.50px;background:#e3e6ea"></div>
<div class="r" style="left:537.00px;top:620.50px;width:1.00px;height:31.50px;background:#e3e6ea"></div>
<div class="r" style="left:612.00px;top:620.50px;width:1.00px;height:31.50px;background:#e3e6ea"></div>
<div class="r" style="left:687.00px;top:620.50px;width:1.00px;height:31.50px;background:#e3e6ea"></div>
<div class="r" style="left:763.00px;top:620.50px;width:1.00px;height:31.50px;background:#e3e6ea"></div>
<div class="r" style="left:838.00px;top:620.50px;width:1.00px;height:31.50px;background:#e3e6ea"></div>
<div class="r" style="left:914.00px;top:620.50px;width:1.00px;height:31.50px;background:#e3e6ea"></div>
<div class="r" style="left:990.00px;top:620.50px;width:1.00px;height:31.50px;background:#e3e6ea"></div>
<div class="r" style="left:1066.00px;top:620.50px;width:1.00px;height:31.50px;background:#e3e6ea"></div>
<div class="r" style="left:1142.00px;top:620.50px;width:1.00px;height:31.50px;background:#e3e6ea"></div>
<div class="r" style="left:1217.00px;top:620.50px;width:1.00px;height:31.50px;background:#e3e6ea"></div>
<div class="r" style="left:1292.00px;top:620.50px;width:1.00px;height:31.50px;background:#e3e6ea"></div>
<div class="r" style="left:1368.00px;top:620.50px;width:1.00px;height:31.50px;background:#e3e6ea"></div>
<div class="r" style="left:1444.00px;top:620.50px;width:1.00px;height:31.50px;background:#e3e6ea"></div>
<div class="r" style="left:1520.00px;top:620.50px;width:1.00px;height:31.50px;background:#e3e6ea"></div>
<div class="r" style="left:1595.00px;top:620.50px;width:1.00px;height:31.50px;background:#e3e6ea"></div>
<div class="r" style="left:35.00px;top:652.00px;width:1561.00px;height:1.00px;background:#a894ee"></div>
<div class="r" style="left:385.00px;top:652.00px;width:1.00px;height:25.00px;background:#ae9cf2"></div>
<div class="r" style="left:461.00px;top:652.00px;width:1.00px;height:25.00px;background:#ae9cf2"></div>
<div class="r" style="left:537.00px;top:652.00px;width:1.00px;height:25.00px;background:#ae9cf2"></div>
<div class="r" style="left:612.00px;top:652.00px;width:1.00px;height:25.00px;background:#ae9cf2"></div>
<div class="r" style="left:687.00px;top:652.00px;width:1.00px;height:25.00px;background:#ae9cf2"></div>
<div class="r" style="left:763.00px;top:652.00px;width:1.00px;height:25.00px;background:#ae9cf2"></div>
<div class="r" style="left:838.00px;top:652.00px;width:1.00px;height:25.00px;background:#ae9cf2"></div>
<div class="r" style="left:914.00px;top:652.00px;width:1.00px;height:25.00px;background:#ae9cf2"></div>
<div class="r" style="left:990.00px;top:652.00px;width:1.00px;height:25.00px;background:#ae9cf2"></div>
<div class="r" style="left:1066.00px;top:652.00px;width:1.00px;height:25.00px;background:#ae9cf2"></div>
<div class="r" style="left:1142.00px;top:652.00px;width:1.00px;height:25.00px;background:#ae9cf2"></div>
<div class="r" style="left:1217.00px;top:652.00px;width:1.00px;height:25.00px;background:#ae9cf2"></div>
<div class="r" style="left:1292.00px;top:652.00px;width:1.00px;height:25.00px;background:#ae9cf2"></div>
<div class="r" style="left:1368.00px;top:652.00px;width:1.00px;height:25.00px;background:#ae9cf2"></div>
<div class="r" style="left:1444.00px;top:652.00px;width:1.00px;height:25.00px;background:#ae9cf2"></div>
<div class="r" style="left:1520.00px;top:652.00px;width:1.00px;height:25.00px;background:#ae9cf2"></div>
<div class="r" style="left:1595.00px;top:652.00px;width:1.00px;height:25.00px;background:#ae9cf2"></div>
<div class="r" style="left:35.00px;top:677.00px;width:1561.00px;height:1.00px;background:#a894ee"></div>
<div class="r" style="left:385.00px;top:677.00px;width:1.00px;height:24.00px;background:#ae9cf2"></div>
<div class="r" style="left:461.00px;top:677.00px;width:1.00px;height:24.00px;background:#ae9cf2"></div>
<div class="r" style="left:537.00px;top:677.00px;width:1.00px;height:24.00px;background:#ae9cf2"></div>
<div class="r" style="left:612.00px;top:677.00px;width:1.00px;height:24.00px;background:#ae9cf2"></div>
<div class="r" style="left:687.00px;top:677.00px;width:1.00px;height:24.00px;background:#ae9cf2"></div>
<div class="r" style="left:763.00px;top:677.00px;width:1.00px;height:24.00px;background:#ae9cf2"></div>
<div class="r" style="left:838.00px;top:677.00px;width:1.00px;height:24.00px;background:#ae9cf2"></div>
<div class="r" style="left:914.00px;top:677.00px;width:1.00px;height:24.00px;background:#ae9cf2"></div>
<div class="r" style="left:990.00px;top:677.00px;width:1.00px;height:24.00px;background:#ae9cf2"></div>
<div class="r" style="left:1066.00px;top:677.00px;width:1.00px;height:24.00px;background:#ae9cf2"></div>
<div class="r" style="left:1142.00px;top:677.00px;width:1.00px;height:24.00px;background:#ae9cf2"></div>
<div class="r" style="left:1217.00px;top:677.00px;width:1.00px;height:24.00px;background:#ae9cf2"></div>
<div class="r" style="left:1292.00px;top:677.00px;width:1.00px;height:24.00px;background:#ae9cf2"></div>
<div class="r" style="left:1368.00px;top:677.00px;width:1.00px;height:24.00px;background:#ae9cf2"></div>
<div class="r" style="left:1444.00px;top:677.00px;width:1.00px;height:24.00px;background:#ae9cf2"></div>
<div class="r" style="left:1520.00px;top:677.00px;width:1.00px;height:24.00px;background:#ae9cf2"></div>
<div class="r" style="left:1595.00px;top:677.00px;width:1.00px;height:24.00px;background:#ae9cf2"></div>
<div class="r" style="left:35.00px;top:701.00px;width:1561.00px;height:1.00px;background:#e3e6ea"></div>
<div class="r" style="left:35.00px;top:733.00px;width:1561.00px;height:1.00px;background:#e3e6ea"></div>
<div class="r" style="left:35.00px;top:701.00px;width:1.00px;height:32.00px;background:#e3e6ea"></div>
<div class="r" style="left:250.00px;top:701.00px;width:1.00px;height:32.00px;background:#e3e6ea"></div>
<div class="r" style="left:385.00px;top:701.00px;width:1.00px;height:32.00px;background:#e3e6ea"></div>
<div class="r" style="left:461.00px;top:701.00px;width:1.00px;height:32.00px;background:#e3e6ea"></div>
<div class="r" style="left:537.00px;top:701.00px;width:1.00px;height:32.00px;background:#e3e6ea"></div>
<div class="r" style="left:612.00px;top:701.00px;width:1.00px;height:32.00px;background:#e3e6ea"></div>
<div class="r" style="left:687.00px;top:701.00px;width:1.00px;height:32.00px;background:#e3e6ea"></div>
<div class="r" style="left:763.00px;top:701.00px;width:1.00px;height:32.00px;background:#e3e6ea"></div>
<div class="r" style="left:838.00px;top:701.00px;width:1.00px;height:32.00px;background:#e3e6ea"></div>
<div class="r" style="left:914.00px;top:701.00px;width:1.00px;height:32.00px;background:#e3e6ea"></div>
<div class="r" style="left:990.00px;top:701.00px;width:1.00px;height:32.00px;background:#e3e6ea"></div>
<div class="r" style="left:1066.00px;top:701.00px;width:1.00px;height:32.00px;background:#e3e6ea"></div>
<div class="r" style="left:1142.00px;top:701.00px;width:1.00px;height:32.00px;background:#e3e6ea"></div>
<div class="r" style="left:1217.00px;top:701.00px;width:1.00px;height:32.00px;background:#e3e6ea"></div>
<div class="r" style="left:1292.00px;top:701.00px;width:1.00px;height:32.00px;background:#e3e6ea"></div>
<div class="r" style="left:1368.00px;top:701.00px;width:1.00px;height:32.00px;background:#e3e6ea"></div>
<div class="r" style="left:1444.00px;top:701.00px;width:1.00px;height:32.00px;background:#e3e6ea"></div>
<div class="r" style="left:1520.00px;top:701.00px;width:1.00px;height:32.00px;background:#e3e6ea"></div>
<div class="r" style="left:1595.00px;top:701.00px;width:1.00px;height:32.00px;background:#e3e6ea"></div>
<div class="r" style="left:24.00px;top:183.00px;width:128.00px;height:52.00px;border:2px solid #e11d24;box-sizing:border-box"></div>
<svg class="r" style="left:140px;top:165px" width="230" height="35" viewBox="0 0 230 35"><line x1="218" y1="10.3" x2="18" y2="24.3" stroke="#e11d24" stroke-width="2.2"/><polygon points="11,24.8 21.5,19.2 22.2,29.6" fill="#e11d24"/></svg>
</body></html>
